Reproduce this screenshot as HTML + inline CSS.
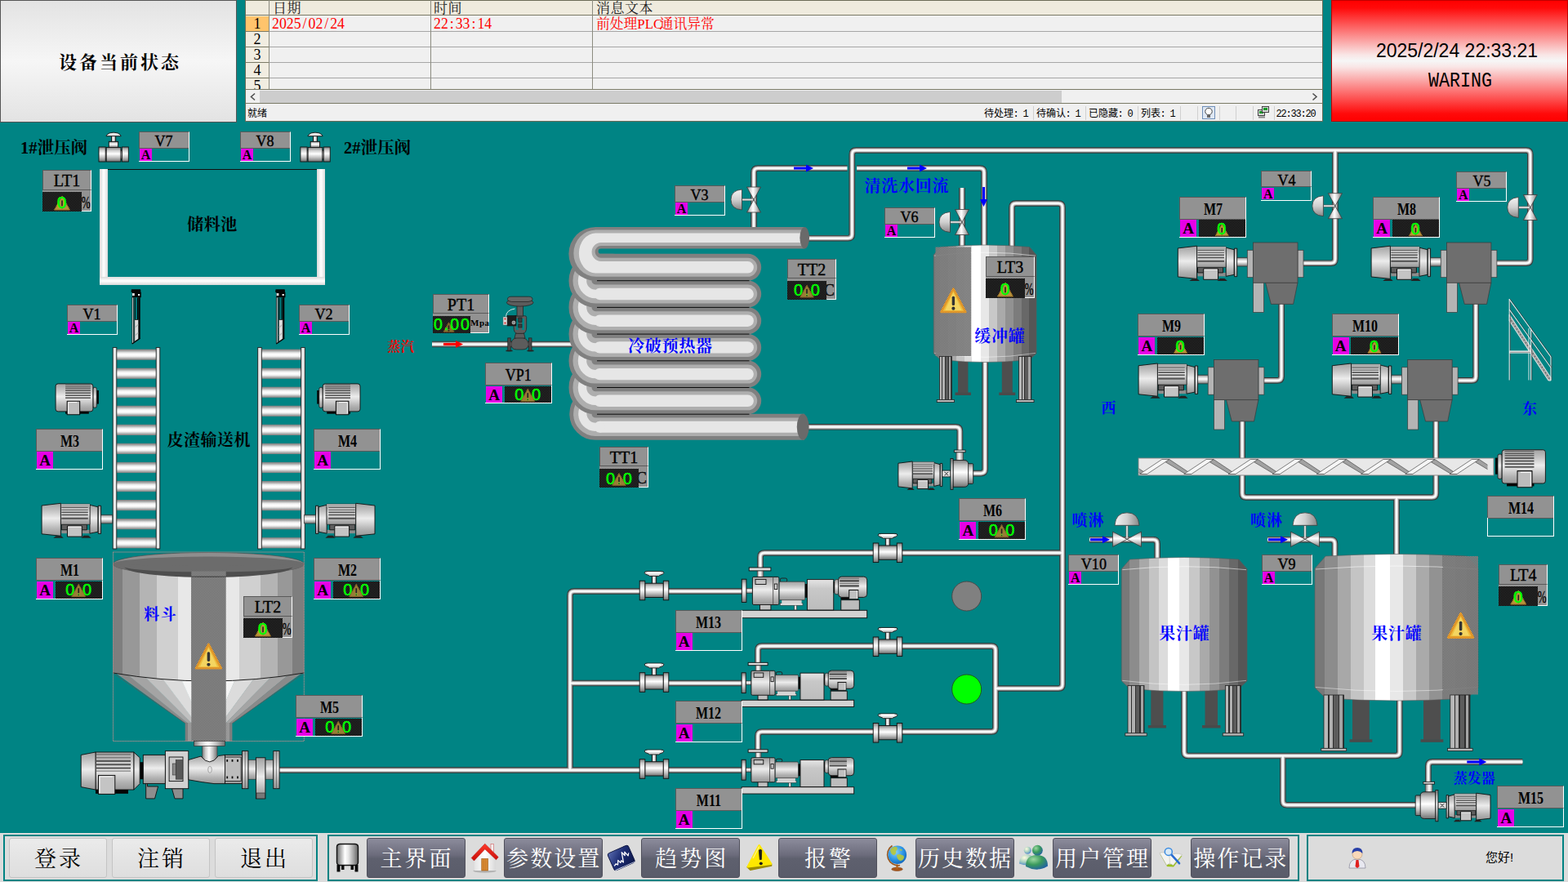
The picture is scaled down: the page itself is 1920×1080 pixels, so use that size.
<!DOCTYPE html>
<html lang="zh"><head><meta charset="utf-8"><title>HMI</title><style>
html,body{margin:0;padding:0;background:#008484}
body{width:1920px;height:1080px;overflow:hidden;position:relative;font-family:"Liberation Sans",sans-serif}
.ser{font-family:"Liberation Serif",serif}
.san{font-family:"Liberation Sans",sans-serif}
.mono{font-family:"Liberation Mono",monospace}
#gfx,#top{position:absolute;left:0;top:0}
#top text,#gfx text{white-space:pre}
</style></head>
<body>
<svg width="0" height="0" style="position:absolute"><defs>
<linearGradient id="cylV" x1="0" y1="0" x2="0" y2="1"><stop offset="0" stop-color="#6a6a6a"/><stop offset="0.12" stop-color="#9a9a9a"/><stop offset="0.38" stop-color="#ffffff"/><stop offset="0.55" stop-color="#e6e6e6"/><stop offset="0.8" stop-color="#a0a0a0"/><stop offset="1" stop-color="#606060"/></linearGradient>
<linearGradient id="cylH" x1="0" y1="0" x2="1" y2="0"><stop offset="0" stop-color="#6a6a6a"/><stop offset="0.12" stop-color="#9a9a9a"/><stop offset="0.38" stop-color="#ffffff"/><stop offset="0.55" stop-color="#e6e6e6"/><stop offset="0.8" stop-color="#a0a0a0"/><stop offset="1" stop-color="#606060"/></linearGradient>
<linearGradient id="cylV2" x1="0" y1="0" x2="0" y2="1"><stop offset="0" stop-color="#7c7c7c"/><stop offset="0.2" stop-color="#cacaca"/><stop offset="0.45" stop-color="#ffffff"/><stop offset="0.7" stop-color="#c6c6c6"/><stop offset="1" stop-color="#727272"/></linearGradient>
<linearGradient id="cylH2" x1="0" y1="0" x2="1" y2="0"><stop offset="0" stop-color="#7c7c7c"/><stop offset="0.2" stop-color="#cacaca"/><stop offset="0.45" stop-color="#ffffff"/><stop offset="0.7" stop-color="#c6c6c6"/><stop offset="1" stop-color="#727272"/></linearGradient>
<linearGradient id="tankH" x1="0" y1="0" x2="1" y2="0"><stop offset="0" stop-color="#787878"/><stop offset="0.06" stop-color="#787878"/><stop offset="0.06" stop-color="#8c8c8c"/><stop offset="0.14" stop-color="#8c8c8c"/><stop offset="0.14" stop-color="#a8a8a8"/><stop offset="0.22" stop-color="#a8a8a8"/><stop offset="0.22" stop-color="#c4c4c4"/><stop offset="0.3" stop-color="#c4c4c4"/><stop offset="0.3" stop-color="#dcdcdc"/><stop offset="0.37" stop-color="#dcdcdc"/><stop offset="0.37" stop-color="#ffffff"/><stop offset="0.46" stop-color="#ffffff"/><stop offset="0.46" stop-color="#e8e8e8"/><stop offset="0.54" stop-color="#e8e8e8"/><stop offset="0.54" stop-color="#c8c8c8"/><stop offset="0.62" stop-color="#c8c8c8"/><stop offset="0.62" stop-color="#aaaaaa"/><stop offset="0.7" stop-color="#aaaaaa"/><stop offset="0.7" stop-color="#929292"/><stop offset="0.78" stop-color="#929292"/><stop offset="0.78" stop-color="#7c7c7c"/><stop offset="0.86" stop-color="#7c7c7c"/><stop offset="0.86" stop-color="#686868"/><stop offset="0.93" stop-color="#686868"/><stop offset="0.93" stop-color="#565656"/><stop offset="1" stop-color="#565656"/></linearGradient>
<linearGradient id="hopH" x1="0" y1="0" x2="1" y2="0"><stop offset="0" stop-color="#7e7e7e"/><stop offset="0.05" stop-color="#7e7e7e"/><stop offset="0.05" stop-color="#989898"/><stop offset="0.14" stop-color="#989898"/><stop offset="0.14" stop-color="#b4b4b4"/><stop offset="0.23" stop-color="#b4b4b4"/><stop offset="0.23" stop-color="#d0d0d0"/><stop offset="0.34" stop-color="#d0d0d0"/><stop offset="0.34" stop-color="#e8e8e8"/><stop offset="0.41" stop-color="#e8e8e8"/><stop offset="0.41" stop-color="#8a8a8a"/><stop offset="0.59" stop-color="#8a8a8a"/><stop offset="0.59" stop-color="#e8e8e8"/><stop offset="0.66" stop-color="#e8e8e8"/><stop offset="0.66" stop-color="#d0d0d0"/><stop offset="0.77" stop-color="#d0d0d0"/><stop offset="0.77" stop-color="#b4b4b4"/><stop offset="0.86" stop-color="#b4b4b4"/><stop offset="0.86" stop-color="#989898"/><stop offset="0.94" stop-color="#989898"/><stop offset="0.94" stop-color="#7e7e7e"/><stop offset="1" stop-color="#7e7e7e"/></linearGradient>
<linearGradient id="legH" x1="0" y1="0" x2="1" y2="0"><stop offset="0" stop-color="#b8b8b8"/><stop offset="0.2" stop-color="#b8b8b8"/><stop offset="0.2" stop-color="#2e2e2e"/><stop offset="0.27" stop-color="#2e2e2e"/><stop offset="0.27" stop-color="#b0b0b0"/><stop offset="0.44" stop-color="#b0b0b0"/><stop offset="0.44" stop-color="#2e2e2e"/><stop offset="0.5" stop-color="#2e2e2e"/><stop offset="0.5" stop-color="#5c5c5c"/><stop offset="0.72" stop-color="#5c5c5c"/><stop offset="0.72" stop-color="#2e2e2e"/><stop offset="0.78" stop-color="#2e2e2e"/><stop offset="0.78" stop-color="#a4a4a4"/><stop offset="0.93" stop-color="#a4a4a4"/><stop offset="0.93" stop-color="#3a3a3a"/><stop offset="1" stop-color="#3a3a3a"/></linearGradient>
<linearGradient id="wallH" x1="0" y1="0" x2="1" y2="0"><stop offset="0" stop-color="#d8d8d8"/><stop offset="0.5" stop-color="#ffffff"/><stop offset="1" stop-color="#dcdcdc"/></linearGradient>
<linearGradient id="wallV" x1="0" y1="0" x2="0" y2="1"><stop offset="0" stop-color="#dcdcdc"/><stop offset="0.5" stop-color="#ffffff"/><stop offset="1" stop-color="#d8d8d8"/></linearGradient>
<linearGradient id="domeH" x1="0" y1="0" x2="1" y2="0"><stop offset="0" stop-color="#f4f4f4"/><stop offset="0.5" stop-color="#d0d0d0"/><stop offset="1" stop-color="#888888"/></linearGradient>
<linearGradient id="domeV" x1="0" y1="0" x2="0" y2="1"><stop offset="0" stop-color="#f4f4f4"/><stop offset="0.5" stop-color="#d0d0d0"/><stop offset="1" stop-color="#888888"/></linearGradient>
<pattern id="dithT" width="2" height="2" patternUnits="userSpaceOnUse"><rect width="1" height="1" fill="#a2a2a2"/><rect x="1" y="1" width="1" height="1" fill="#a2a2a2"/></pattern>
<pattern id="dith" width="2" height="2" patternUnits="userSpaceOnUse"><rect width="2" height="2" fill="#989898"/><rect width="1" height="1" fill="#606060"/><rect x="1" y="1" width="1" height="1" fill="#606060"/></pattern>
<linearGradient id="motV" x1="0" y1="0" x2="0" y2="1"><stop offset="0" stop-color="#a2a2a2"/><stop offset="0.22" stop-color="#c2c2c2"/><stop offset="0.46" stop-color="#ececec"/><stop offset="0.6" stop-color="#d6d6d6"/><stop offset="0.8" stop-color="#b2b2b2"/><stop offset="1" stop-color="#989898"/></linearGradient>
<linearGradient id="guardV" x1="0" y1="0" x2="0" y2="1"><stop offset="0" stop-color="#e4e4e4"/><stop offset="0.12" stop-color="#dadada"/><stop offset="0.3" stop-color="#c8c8c8"/><stop offset="1" stop-color="#bcbcbc"/></linearGradient>
<linearGradient id="rollV" x1="0" y1="0" x2="0" y2="1"><stop offset="0" stop-color="#7c7c7c"/><stop offset="0.14" stop-color="#a4a4a4"/><stop offset="0.34" stop-color="#ececec"/><stop offset="0.5" stop-color="#ffffff"/><stop offset="0.66" stop-color="#f2f2f2"/><stop offset="0.86" stop-color="#acacac"/><stop offset="1" stop-color="#7c7c7c"/></linearGradient>
<clipPath id="scClip"><rect x="1394.5" y="561.5" width="427" height="20"/></clipPath>
<linearGradient id="roofG" x1="0" y1="0" x2="0" y2="1"><stop offset="0" stop-color="#ff3a2a"/><stop offset="1" stop-color="#c80c08"/></linearGradient>
<linearGradient id="wallG" x1="0" y1="0" x2="1" y2="0"><stop offset="0" stop-color="#e4e4e4"/><stop offset="0.5" stop-color="#ffffff"/><stop offset="1" stop-color="#d8d8d8"/></linearGradient>
<linearGradient id="trendG" x1="0" y1="0" x2="1" y2="1"><stop offset="0" stop-color="#5a6cb0"/><stop offset="0.45" stop-color="#1e2e74"/><stop offset="1" stop-color="#0c1648"/></linearGradient>
<radialGradient id="globeG" cx="0.4" cy="0.35" r="0.7"><stop offset="0" stop-color="#8ad0f8"/><stop offset="0.6" stop-color="#2a94e4"/><stop offset="1" stop-color="#1464b8"/></radialGradient>
<radialGradient id="usrA" cx="0.35" cy="0.3" r="0.8"><stop offset="0" stop-color="#fffbe0"/><stop offset="0.5" stop-color="#a8d0c0"/><stop offset="1" stop-color="#3a78d0"/></radialGradient>
<radialGradient id="usrB" cx="0.35" cy="0.3" r="0.85"><stop offset="0" stop-color="#9cd8a0"/><stop offset="0.45" stop-color="#3a9a5c"/><stop offset="1" stop-color="#1c54b4"/></radialGradient>
</defs></svg>
<svg id="gfx" width="1920" height="1080" viewBox="0 0 1920 1080">
<g fill="none" stroke-linecap="butt" stroke-linejoin="round"><path d="M529 421.5L702 421.5M923 282L923 211Q923 206 928 206L1200 206Q1205 206 1205 211L1205 302M1178 230L1178 302M1239 302L1239 254Q1239 249 1244 249L1296 249Q1301 249 1301 254L1301 838Q1301 843 1296 843L1219 843M928 814L928 796.1Q928 791.1 933 791.1L1214 791.1Q1219 791.1 1219 796.1L1219 891Q1219 896 1214 896L933 896Q928 896 928 901L928 920M931 702L931 682Q931 677 936 677L1301 677M341 943L910 943M698 943L698 729Q698 724 703 724L910 724M698 836.5L910 836.5M988 522.8L1170.4 522.8Q1175.4 522.8 1175.4 527.8L1175.4 553M1206.2 440L1206.2 574.6Q1206.2 579.6 1201.2 579.6L1190 579.6M1334 660.7L1412.1 660.7Q1417.1 660.7 1417.1 665.7L1417.1 686M1552 660.7L1629.5 660.7Q1634.5 660.7 1634.5 665.7L1634.5 686M1569.1 370L1569.1 460.9Q1569.1 465.9 1564.1 465.9L1547 465.9M1807.1 370L1807.1 460.9Q1807.1 465.9 1802.1 465.9L1784 465.9M1521.1 512L1521.1 604Q1521.1 609 1526.1 609L1753.3 609Q1758.3 609 1758.3 604L1758.3 512M1710 609L1710 682M1450 845L1450 920.5Q1450 925.5 1455 925.5L1708.8 925.5Q1713.8 925.5 1713.8 920.5L1713.8 856M1570.8 925.5L1570.8 980.8Q1570.8 985.8 1575.8 985.8L1734 985.8M1748.9 959L1748.9 937.9Q1748.9 932.9 1753.9 932.9L1864.3 932.9" stroke="#363636" stroke-width="7.6"/><path d="M529 421.5L702 421.5M923 282L923 211Q923 206 928 206L1200 206Q1205 206 1205 211L1205 302M1178 230L1178 302M1239 302L1239 254Q1239 249 1244 249L1296 249Q1301 249 1301 254L1301 838Q1301 843 1296 843L1219 843M928 814L928 796.1Q928 791.1 933 791.1L1214 791.1Q1219 791.1 1219 796.1L1219 891Q1219 896 1214 896L933 896Q928 896 928 901L928 920M931 702L931 682Q931 677 936 677L1301 677M341 943L910 943M698 943L698 729Q698 724 703 724L910 724M698 836.5L910 836.5M988 522.8L1170.4 522.8Q1175.4 522.8 1175.4 527.8L1175.4 553M1206.2 440L1206.2 574.6Q1206.2 579.6 1201.2 579.6L1190 579.6M1334 660.7L1412.1 660.7Q1417.1 660.7 1417.1 665.7L1417.1 686M1552 660.7L1629.5 660.7Q1634.5 660.7 1634.5 665.7L1634.5 686M1569.1 370L1569.1 460.9Q1569.1 465.9 1564.1 465.9L1547 465.9M1807.1 370L1807.1 460.9Q1807.1 465.9 1802.1 465.9L1784 465.9M1521.1 512L1521.1 604Q1521.1 609 1526.1 609L1753.3 609Q1758.3 609 1758.3 604L1758.3 512M1710 609L1710 682M1450 845L1450 920.5Q1450 925.5 1455 925.5L1708.8 925.5Q1713.8 925.5 1713.8 920.5L1713.8 856M1570.8 925.5L1570.8 980.8Q1570.8 985.8 1575.8 985.8L1734 985.8M1748.9 959L1748.9 937.9Q1748.9 932.9 1753.9 932.9L1864.3 932.9" stroke="#8e8e8e" stroke-width="5.7"/><path d="M529 421.5L702 421.5M923 282L923 211Q923 206 928 206L1200 206Q1205 206 1205 211L1205 302M1178 230L1178 302M1239 302L1239 254Q1239 249 1244 249L1296 249Q1301 249 1301 254L1301 838Q1301 843 1296 843L1219 843M928 814L928 796.1Q928 791.1 933 791.1L1214 791.1Q1219 791.1 1219 796.1L1219 891Q1219 896 1214 896L933 896Q928 896 928 901L928 920M931 702L931 682Q931 677 936 677L1301 677M341 943L910 943M698 943L698 729Q698 724 703 724L910 724M698 836.5L910 836.5M988 522.8L1170.4 522.8Q1175.4 522.8 1175.4 527.8L1175.4 553M1206.2 440L1206.2 574.6Q1206.2 579.6 1201.2 579.6L1190 579.6M1334 660.7L1412.1 660.7Q1417.1 660.7 1417.1 665.7L1417.1 686M1552 660.7L1629.5 660.7Q1634.5 660.7 1634.5 665.7L1634.5 686M1569.1 370L1569.1 460.9Q1569.1 465.9 1564.1 465.9L1547 465.9M1807.1 370L1807.1 460.9Q1807.1 465.9 1802.1 465.9L1784 465.9M1521.1 512L1521.1 604Q1521.1 609 1526.1 609L1753.3 609Q1758.3 609 1758.3 604L1758.3 512M1710 609L1710 682M1450 845L1450 920.5Q1450 925.5 1455 925.5L1708.8 925.5Q1713.8 925.5 1713.8 920.5L1713.8 856M1570.8 925.5L1570.8 980.8Q1570.8 985.8 1575.8 985.8L1734 985.8M1748.9 959L1748.9 937.9Q1748.9 932.9 1753.9 932.9L1864.3 932.9" stroke="#c6c6c6" stroke-width="4.1"/><path d="M529 421.5L702 421.5M923 282L923 211Q923 206 928 206L1200 206Q1205 206 1205 211L1205 302M1178 230L1178 302M1239 302L1239 254Q1239 249 1244 249L1296 249Q1301 249 1301 254L1301 838Q1301 843 1296 843L1219 843M928 814L928 796.1Q928 791.1 933 791.1L1214 791.1Q1219 791.1 1219 796.1L1219 891Q1219 896 1214 896L933 896Q928 896 928 901L928 920M931 702L931 682Q931 677 936 677L1301 677M341 943L910 943M698 943L698 729Q698 724 703 724L910 724M698 836.5L910 836.5M988 522.8L1170.4 522.8Q1175.4 522.8 1175.4 527.8L1175.4 553M1206.2 440L1206.2 574.6Q1206.2 579.6 1201.2 579.6L1190 579.6M1334 660.7L1412.1 660.7Q1417.1 660.7 1417.1 665.7L1417.1 686M1552 660.7L1629.5 660.7Q1634.5 660.7 1634.5 665.7L1634.5 686M1569.1 370L1569.1 460.9Q1569.1 465.9 1564.1 465.9L1547 465.9M1807.1 370L1807.1 460.9Q1807.1 465.9 1802.1 465.9L1784 465.9M1521.1 512L1521.1 604Q1521.1 609 1526.1 609L1753.3 609Q1758.3 609 1758.3 604L1758.3 512M1710 609L1710 682M1450 845L1450 920.5Q1450 925.5 1455 925.5L1708.8 925.5Q1713.8 925.5 1713.8 920.5L1713.8 856M1570.8 925.5L1570.8 980.8Q1570.8 985.8 1575.8 985.8L1734 985.8M1748.9 959L1748.9 937.9Q1748.9 932.9 1753.9 932.9L1864.3 932.9" stroke="#f0f0f0" stroke-width="2.43"/><path d="M529 421.5L702 421.5M923 282L923 211Q923 206 928 206L1200 206Q1205 206 1205 211L1205 302M1178 230L1178 302M1239 302L1239 254Q1239 249 1244 249L1296 249Q1301 249 1301 254L1301 838Q1301 843 1296 843L1219 843M928 814L928 796.1Q928 791.1 933 791.1L1214 791.1Q1219 791.1 1219 796.1L1219 891Q1219 896 1214 896L933 896Q928 896 928 901L928 920M931 702L931 682Q931 677 936 677L1301 677M341 943L910 943M698 943L698 729Q698 724 703 724L910 724M698 836.5L910 836.5M988 522.8L1170.4 522.8Q1175.4 522.8 1175.4 527.8L1175.4 553M1206.2 440L1206.2 574.6Q1206.2 579.6 1201.2 579.6L1190 579.6M1334 660.7L1412.1 660.7Q1417.1 660.7 1417.1 665.7L1417.1 686M1552 660.7L1629.5 660.7Q1634.5 660.7 1634.5 665.7L1634.5 686M1569.1 370L1569.1 460.9Q1569.1 465.9 1564.1 465.9L1547 465.9M1807.1 370L1807.1 460.9Q1807.1 465.9 1802.1 465.9L1784 465.9M1521.1 512L1521.1 604Q1521.1 609 1526.1 609L1753.3 609Q1758.3 609 1758.3 604L1758.3 512M1710 609L1710 682M1450 845L1450 920.5Q1450 925.5 1455 925.5L1708.8 925.5Q1713.8 925.5 1713.8 920.5L1713.8 856M1570.8 925.5L1570.8 980.8Q1570.8 985.8 1575.8 985.8L1734 985.8M1748.9 959L1748.9 937.9Q1748.9 932.9 1753.9 932.9L1864.3 932.9" stroke="#ffffff" stroke-width="1.14"/></g>
<path d="M1043.300 199V213" stroke="#008484" stroke-width="11.600" fill="none"/>
<g fill="none" stroke-linecap="butt" stroke-linejoin="round"><path d="M988 291.7L1038.3 291.7Q1043.3 291.7 1043.3 286.7L1043.3 189Q1043.3 184 1048.3 184L1868.8 184Q1873.8 184 1873.8 189L1873.8 317.2Q1873.8 322.2 1868.8 322.2L1832 322.2M1634.9 184L1634.9 317.2Q1634.9 322.2 1629.9 322.2L1594 322.2" stroke="#363636" stroke-width="7.6"/><path d="M988 291.7L1038.3 291.7Q1043.3 291.7 1043.3 286.7L1043.3 189Q1043.3 184 1048.3 184L1868.8 184Q1873.8 184 1873.8 189L1873.8 317.2Q1873.8 322.2 1868.8 322.2L1832 322.2M1634.9 184L1634.9 317.2Q1634.9 322.2 1629.9 322.2L1594 322.2" stroke="#8e8e8e" stroke-width="5.7"/><path d="M988 291.7L1038.3 291.7Q1043.3 291.7 1043.3 286.7L1043.3 189Q1043.3 184 1048.3 184L1868.8 184Q1873.8 184 1873.8 189L1873.8 317.2Q1873.8 322.2 1868.8 322.2L1832 322.2M1634.9 184L1634.9 317.2Q1634.9 322.2 1629.9 322.2L1594 322.2" stroke="#c6c6c6" stroke-width="4.1"/><path d="M988 291.7L1038.3 291.7Q1043.3 291.7 1043.3 286.7L1043.3 189Q1043.3 184 1048.3 184L1868.8 184Q1873.8 184 1873.8 189L1873.8 317.2Q1873.8 322.2 1868.8 322.2L1832 322.2M1634.9 184L1634.9 317.2Q1634.9 322.2 1629.9 322.2L1594 322.2" stroke="#f0f0f0" stroke-width="2.43"/><path d="M988 291.7L1038.3 291.7Q1043.3 291.7 1043.3 286.7L1043.3 189Q1043.3 184 1048.3 184L1868.8 184Q1873.8 184 1873.8 189L1873.8 317.2Q1873.8 322.2 1868.8 322.2L1832 322.2M1634.9 184L1634.9 317.2Q1634.9 322.2 1629.9 322.2L1594 322.2" stroke="#ffffff" stroke-width="1.14"/></g>
<path d="M-12 -1.5h15v-3l9 4.500-9 4.500v-3h-15z" fill="#ff0000" transform="translate(555,421.5) rotate(0)"/>
<path d="M-12 -1.5h15v-3l9 4.500-9 4.500v-3h-15z" fill="#0000ff" transform="translate(984,206) rotate(0)"/>
<path d="M-12 -1.5h15v-3l9 4.500-9 4.500v-3h-15z" fill="#0000ff" transform="translate(1123,206) rotate(0)"/>
<path d="M-12 -1.5h15v-3l9 4.500-9 4.500v-3h-15z" fill="#0000ff" transform="translate(1204.5,241) rotate(90)"/>
<path d="M-12 -1.5h15v-3l9 4.500-9 4.500v-3h-15z" fill="#0000ff" transform="translate(1347,660.8) rotate(0)"/>
<path d="M-12 -1.5h15v-3l9 4.500-9 4.500v-3h-15z" fill="#0000ff" transform="translate(1565,660.8) rotate(0)"/>
<path d="M-12 -1.5h15v-3l9 4.500-9 4.500v-3h-15z" fill="#0000ff" transform="translate(1808.3,932.9) rotate(0)"/>
<g><rect x="122" y="207" width="10" height="142" fill="url(#wallH)"/><rect x="388" y="207" width="10" height="142" fill="url(#wallH)"/><rect x="122" y="339" width="276" height="10" fill="url(#wallV)"/><path d="M132 207.500H388" stroke="#111" stroke-width="1"/></g>
<g><rect x="142.5" y="427.6" width="49" height="13.2" fill="url(#rollV)"/><rect x="142.5" y="450.65" width="49" height="13.2" fill="url(#rollV)"/><rect x="142.5" y="473.7" width="49" height="13.2" fill="url(#rollV)"/><rect x="142.5" y="496.75" width="49" height="13.2" fill="url(#rollV)"/><rect x="142.5" y="519.8" width="49" height="13.2" fill="url(#rollV)"/><rect x="142.5" y="542.85" width="49" height="13.2" fill="url(#rollV)"/><rect x="142.5" y="565.9" width="49" height="13.2" fill="url(#rollV)"/><rect x="142.5" y="588.95" width="49" height="13.2" fill="url(#rollV)"/><rect x="142.5" y="612" width="49" height="13.2" fill="url(#rollV)"/><rect x="142.5" y="635.05" width="49" height="13.2" fill="url(#rollV)"/><rect x="142.5" y="658.1" width="49" height="13.2" fill="url(#rollV)"/><rect x="138.2" y="425.6" width="4.6" height="246.4" fill="#e9e9e9" stroke="#1c1c1c" stroke-width="0.9"/><rect x="191.2" y="425.6" width="4.6" height="246.4" fill="#e9e9e9" stroke="#1c1c1c" stroke-width="0.9"/></g>
<g><rect x="320" y="427.6" width="49" height="13.2" fill="url(#rollV)"/><rect x="320" y="450.65" width="49" height="13.2" fill="url(#rollV)"/><rect x="320" y="473.7" width="49" height="13.2" fill="url(#rollV)"/><rect x="320" y="496.75" width="49" height="13.2" fill="url(#rollV)"/><rect x="320" y="519.8" width="49" height="13.2" fill="url(#rollV)"/><rect x="320" y="542.85" width="49" height="13.2" fill="url(#rollV)"/><rect x="320" y="565.9" width="49" height="13.2" fill="url(#rollV)"/><rect x="320" y="588.95" width="49" height="13.2" fill="url(#rollV)"/><rect x="320" y="612" width="49" height="13.2" fill="url(#rollV)"/><rect x="320" y="635.05" width="49" height="13.2" fill="url(#rollV)"/><rect x="320" y="658.1" width="49" height="13.2" fill="url(#rollV)"/><rect x="315.7" y="425.6" width="4.6" height="246.4" fill="#e9e9e9" stroke="#1c1c1c" stroke-width="0.9"/><rect x="368.7" y="425.6" width="4.6" height="246.4" fill="#e9e9e9" stroke="#1c1c1c" stroke-width="0.9"/></g>
<g transform="translate(68.1,469.9)" stroke-linejoin="round"><rect x="50.21" y="8.11" width="2.59" height="16.6" fill="#050505"/><rect x="11.99" y="33.31" width="28.72" height="3.49" fill="#050505"/><rect x="45.78" y="4.4" width="4.44" height="25.01" fill="url(#motV)" stroke="#111" stroke-width="0.8" rx="2"/><rect x="0" y="0" width="45.78" height="34" fill="url(#motV)" stroke="#111" stroke-width="0.9" rx="3"/><rect x="11.99" y="1.14" width="30.78" height="0.76" fill="#555555"/><rect x="11.99" y="3.22" width="30.78" height="1.14" fill="#555555"/><rect x="11.99" y="5.31" width="30.78" height="1.14" fill="#555555"/><rect x="11.99" y="7.58" width="30.78" height="1.59" fill="#555555"/><rect x="11.99" y="10.54" width="30.78" height="1.59" fill="#555555"/><rect x="11.99" y="13.53" width="30.78" height="1.59" fill="#555555"/><rect x="11.99" y="16.52" width="30.78" height="1.59" fill="#555555"/><rect x="14.1" y="21.3" width="15.47" height="16.6" fill="#bcbcbc" stroke="#111" stroke-width="1.1"/><path d="M15.58 36.38V22.74H26.4" fill="none" stroke="#fff" stroke-width="1"/></g>
<g transform="translate(441,469.9) scale(-1,1)" stroke-linejoin="round"><rect x="50.21" y="8.11" width="2.59" height="16.6" fill="#050505"/><rect x="11.99" y="33.31" width="28.72" height="3.49" fill="#050505"/><rect x="45.78" y="4.4" width="4.44" height="25.01" fill="url(#motV)" stroke="#111" stroke-width="0.8" rx="2"/><rect x="0" y="0" width="45.78" height="34" fill="url(#motV)" stroke="#111" stroke-width="0.9" rx="3"/><rect x="11.99" y="1.14" width="30.78" height="0.76" fill="#555555"/><rect x="11.99" y="3.22" width="30.78" height="1.14" fill="#555555"/><rect x="11.99" y="5.31" width="30.78" height="1.14" fill="#555555"/><rect x="11.99" y="7.58" width="30.78" height="1.59" fill="#555555"/><rect x="11.99" y="10.54" width="30.78" height="1.59" fill="#555555"/><rect x="11.99" y="13.53" width="30.78" height="1.59" fill="#555555"/><rect x="11.99" y="16.52" width="30.78" height="1.59" fill="#555555"/><rect x="14.1" y="21.3" width="15.47" height="16.6" fill="#bcbcbc" stroke="#111" stroke-width="1.1"/><path d="M15.58 36.38V22.74H26.4" fill="none" stroke="#fff" stroke-width="1"/></g>
<g transform="translate(51.1,616.3)" stroke-linejoin="round"><path d="M14.21 42.5L17.4 39.95L23.93 39.95L26.68 42.5Z" fill="#222"/><path d="M48.29 42.5L51.47 39.52L57.28 39.52L60.61 42.5Z" fill="#222"/><rect x="24.21" y="32.51" width="34.66" height="4.38" fill="#8c8c8c"/><rect x="24.21" y="25.8" width="31.1" height="6.71" fill="#5e5e5e" stroke="#111" stroke-width="0.9"/><path d="M58.87 2L68.88 4.5L68.88 34.89L58.87 36.89Z" fill="url(#motV)" stroke="#111" stroke-width="0.9"/><rect x="23.27" y="0.85" width="35.6" height="25.07" fill="url(#motV)" stroke="#111" stroke-width="0.6"/><rect x="23.27" y="0.85" width="35.6" height="3.82" fill="#acacac"/><rect x="24.21" y="4.67" width="32.48" height="0.93" fill="#555555"/><rect x="24.21" y="7.65" width="32.48" height="0.93" fill="#555555"/><rect x="24.21" y="10.2" width="32.48" height="1.7" fill="#555555"/><rect x="24.21" y="13.3" width="32.48" height="1.7" fill="#555555"/><rect x="24.21" y="17.43" width="32.48" height="2.12" fill="#555555"/><path d="M0 2.72L23.27 0L23.27 39.95L0 37.53Z" fill="url(#motV)" stroke="#111" stroke-width="0.9"/><rect x="69.16" y="2.98" width="3.33" height="34.21" fill="url(#motV)" stroke="#111" stroke-width="0.9"/><rect x="72.5" y="14.11" width="14" height="10.58" fill="url(#cylV2)" stroke="#222" stroke-width="0.6"/><rect x="31.39" y="27.71" width="17.84" height="13.09" fill="#c4c4c4" stroke="#111" stroke-width="1"/><rect x="32.26" y="28.26" width="16.09" height="1.27" fill="#f4f4f4"/></g>
<g transform="translate(459,616.3) scale(-1,1)" stroke-linejoin="round"><path d="M14.21 42.5L17.4 39.95L23.93 39.95L26.68 42.5Z" fill="#222"/><path d="M48.29 42.5L51.47 39.52L57.28 39.52L60.61 42.5Z" fill="#222"/><rect x="24.21" y="32.51" width="34.66" height="4.38" fill="#8c8c8c"/><rect x="24.21" y="25.8" width="31.1" height="6.71" fill="#5e5e5e" stroke="#111" stroke-width="0.9"/><path d="M58.87 2L68.88 4.5L68.88 34.89L58.87 36.89Z" fill="url(#motV)" stroke="#111" stroke-width="0.9"/><rect x="23.27" y="0.85" width="35.6" height="25.07" fill="url(#motV)" stroke="#111" stroke-width="0.6"/><rect x="23.27" y="0.85" width="35.6" height="3.82" fill="#acacac"/><rect x="24.21" y="4.67" width="32.48" height="0.93" fill="#555555"/><rect x="24.21" y="7.65" width="32.48" height="0.93" fill="#555555"/><rect x="24.21" y="10.2" width="32.48" height="1.7" fill="#555555"/><rect x="24.21" y="13.3" width="32.48" height="1.7" fill="#555555"/><rect x="24.21" y="17.43" width="32.48" height="2.12" fill="#555555"/><path d="M0 2.72L23.27 0L23.27 39.95L0 37.53Z" fill="url(#motV)" stroke="#111" stroke-width="0.9"/><rect x="69.16" y="2.98" width="3.33" height="34.21" fill="url(#motV)" stroke="#111" stroke-width="0.9"/><rect x="72.5" y="14.11" width="14" height="10.58" fill="url(#cylV2)" stroke="#222" stroke-width="0.6"/><rect x="31.39" y="27.71" width="17.84" height="13.09" fill="#c4c4c4" stroke="#111" stroke-width="1"/><rect x="32.26" y="28.26" width="16.09" height="1.27" fill="#f4f4f4"/></g>
<g transform="translate(161,354)"><path d="M0.500 0.300h10q0.800 0 0.800 1v2.700h-11.600v-2.700q0 -1 0.800 -1z" fill="#050505"/><rect x="0.800" y="3.800" width="11" height="6.400" fill="#050505"/><rect x="1" y="5" width="2.800" height="3.200" fill="#dcdcdc"/><rect x="8" y="6" width="2.200" height="2" fill="#f0f0f0"/><path d="M8.300 10h2.400V60.300l-2.400 1.600z" fill="#050505"/><path d="M4.300 10.500V37.500M7.400 10.500V37.500" stroke="#050505" stroke-width="1.100"/><path d="M3.700 37.500h5v23.500l-5 3.500z" fill="#dedede" stroke="#1a1a1a" stroke-width="0.8"/><path d="M4.200 47l4 -3.500M4.200 57l4 -3.500" stroke="#b8b8b8" stroke-width="1.200"/><path d="M0.800 10h1.700V65.800l-1.700 1.200z" fill="#ececec" stroke="#050505" stroke-width="0.700"/><path d="M0.800 67L10.700 60.300" stroke="#050505" stroke-width="1.200"/></g>
<g transform="translate(337.6,354)"><path d="M0.500 0.300h10q0.800 0 0.800 1v2.700h-11.600v-2.700q0 -1 0.800 -1z" fill="#050505"/><rect x="0.800" y="3.800" width="11" height="6.400" fill="#050505"/><rect x="1" y="5" width="2.800" height="3.200" fill="#dcdcdc"/><rect x="8" y="6" width="2.200" height="2" fill="#f0f0f0"/><path d="M8.300 10h2.400V60.300l-2.400 1.600z" fill="#050505"/><path d="M4.300 10.500V37.500M7.400 10.500V37.500" stroke="#050505" stroke-width="1.100"/><path d="M3.700 37.500h5v23.500l-5 3.500z" fill="#dedede" stroke="#1a1a1a" stroke-width="0.8"/><path d="M4.200 47l4 -3.500M4.200 57l4 -3.500" stroke="#b8b8b8" stroke-width="1.200"/><path d="M0.800 10h1.700V65.800l-1.700 1.200z" fill="#ececec" stroke="#050505" stroke-width="0.700"/><path d="M0.800 67L10.700 60.300" stroke="#050505" stroke-width="1.200"/></g>
<g transform="translate(139.1,162)" stroke="#111" stroke-width="0.9"><rect x="-2.6" y="4.2" width="5.2" height="7.5" fill="url(#cylH2)"/><path d="M-9.100 4.700Q-9.100 3 -5 0.900Q0 -0.600 5 0.900Q9.100 3 9.100 4.700Z" fill="#e4e4e4"/><rect x="-5.8" y="11.3" width="11.3" height="7.4" fill="url(#cylV2)"/><rect x="-10.2" y="22" width="20.6" height="11" fill="url(#cylV2)"/><rect x="-8.9" y="18.4" width="17.7" height="17.6" fill="url(#cylV2)"/><rect x="-18.1" y="18" width="8.2" height="18" fill="url(#cylV2)"/><rect x="10.2" y="18" width="8" height="18" fill="url(#cylV2)"/></g>
<g transform="translate(386,162)" stroke="#111" stroke-width="0.9"><rect x="-2.6" y="4.2" width="5.2" height="7.5" fill="url(#cylH2)"/><path d="M-9.100 4.700Q-9.100 3 -5 0.900Q0 -0.600 5 0.900Q9.100 3 9.100 4.700Z" fill="#e4e4e4"/><rect x="-5.8" y="11.3" width="11.3" height="7.4" fill="url(#cylV2)"/><rect x="-10.2" y="22" width="20.6" height="11" fill="url(#cylV2)"/><rect x="-8.9" y="18.4" width="17.7" height="17.6" fill="url(#cylV2)"/><rect x="-18.1" y="18" width="8.2" height="18" fill="url(#cylV2)"/><rect x="10.2" y="18" width="8" height="18" fill="url(#cylV2)"/></g>
<g><path d="M138.5 822H151.41L230.19 885.500H226.7Z" fill="#8a8a8a"/><path d="M151.01 822H170.93L235 885.500H229.79Z" fill="#a4a4a4"/><path d="M170.53 822H192.44L240.31 885.500H234.6Z" fill="#c0c0c0"/><path d="M192.04 822H217.92L246.6 885.500H239.91Z" fill="#dcdcdc"/><path d="M217.52 822H234.76L250.76 885.500H246.2Z" fill="#f4f4f4"/><path d="M234.36 822H276.84L261.14 885.500H250.36Z" fill="#8a8a8a"/><path d="M276.44 822H292.51L265.01 885.500H260.74Z" fill="#f4f4f4"/><path d="M292.11 822H317.76L271.24 885.500H264.61Z" fill="#dcdcdc"/><path d="M317.36 822H339.27L276.55 885.500H270.84Z" fill="#c0c0c0"/><path d="M338.87 822H358.67L281.34 885.500H276.15Z" fill="#a4a4a4"/><path d="M358.27 822H372.7L284.8 885.500H280.94Z" fill="#8a8a8a"/><rect x="226.7" y="885" width="57.7" height="22.500" fill="url(#hopH)"/><path d="M138.5 690.500V824Q255.4 844 372.3 824V690.500Z" fill="url(#hopH)"/><path d="M138.5 824Q255.4 844 372.3 824" fill="none" stroke="#1c1c1c" stroke-width="1"/><path d="M138.5 824L226.7 885.500M372.3 824L284.4 885.500" stroke="#5a5a5a" stroke-width="0.8"/><rect x="234.3" y="699.5" width="42.4" height="208" fill="url(#dith)"/><ellipse cx="255.4" cy="690.500" rx="116.9" ry="14" fill="#8e8e8e" stroke="#444" stroke-width="0.6"/><path d="M138.5 690.500A116.9 14 0 0 0 372.3 690.500A116.9 9 0 0 0 138.5 690.500Z" fill="#6c6c6c"/><path d="M138.5 690.500A116.9 14 0 0 0 372.3 690.500A116.9 2 0 0 1 138.5 690.500Z" fill="#6c6c6c"/><path d="M152.5 694A102.9 13 0 0 0 358.3 694A102.9 6.500 0 0 1 152.5 694Z" fill="#4e4e4e"/><rect x="234.3" y="699.5" width="42.4" height="6" fill="url(#dith)"/><rect x="138.5" y="676" width="233.8" height="231.500" fill="none" stroke="#f49090" stroke-width="1" stroke-dasharray="1 1"/></g>
<g><path d="M255.4 788.9L270.8 818.3L240 818.3Z" fill="#efbe3c" stroke="#e0962a" stroke-width="2.62" stroke-linejoin="round"/><path d="M255.4 793.45L265.9 816.2L244.9 816.2Z" fill="#f7e47a" opacity="0.6"/><rect x="253.65" y="798.35" width="3.5" height="11.55" rx="1.57" fill="#333"/><circle cx="255.4" cy="813.75" r="2.1" fill="#333"/></g>
<g><rect x="247.75" y="912.5" width="18.25" height="21" fill="url(#cylH2)" stroke="#333" stroke-width="0.6"/><rect x="237.6" y="907.4" width="37.9" height="6.1" fill="url(#cylH2)" stroke="#333" stroke-width="0.7"/><path d="M178.700 945.400H180.500V963H193.600L189.500 977.900H178.700Z" fill="#8e8e8e" stroke="#111" stroke-width="0.9" stroke-linejoin="round"/><path d="M210.500 965.700H224V977.900H214Z" fill="#8e8e8e" stroke="#111" stroke-width="0.9" stroke-linejoin="round"/><rect x="175.3" y="924.4" width="27.1" height="35.2" fill="url(#motV)" stroke="#111" stroke-width="0.9"/><rect x="202.4" y="919.6" width="28.4" height="46.1" fill="#d2d2d2" stroke="#111" stroke-width="0.9"/><rect x="207.1" y="927" width="16.9" height="29.6" fill="#c8c8c8" stroke="#111" stroke-width="0.9"/><rect x="211.2" y="935" width="4.2" height="14" fill="#8a8a8a" stroke="#222" stroke-width="0.5"/><rect x="215.2" y="930.5" width="8.2" height="23.7" fill="#585858" stroke="#222" stroke-width="0.5"/><path d="M230.800 930.500L246 926Q256.900 940 267.500 925.500L275.500 924.400V959.600H262Q248 958 230.800 954.800Z" fill="url(#motV)" stroke="#111" stroke-width="0.9" stroke-linejoin="round"/><ellipse cx="257" cy="942.300" rx="2.300" ry="4" fill="#e8e8e8" stroke="#888" stroke-width="0.7"/><rect x="275.5" y="924.4" width="21" height="35.2" fill="url(#motV)" stroke="#111" stroke-width="0.9"/><rect x="275.5" y="927" width="19.6" height="29.6" fill="#bcbcbc" stroke="#111" stroke-width="0.8"/><rect x="277.3" y="930" width="1.8" height="2.8" fill="#111"/><rect x="277.3" y="950.5" width="1.8" height="2.8" fill="#111"/><rect x="283.6" y="930" width="1.8" height="2.8" fill="#111"/><rect x="283.6" y="950.5" width="1.8" height="2.8" fill="#111"/><rect x="290.1" y="930" width="1.8" height="2.8" fill="#111"/><rect x="290.1" y="950.5" width="1.8" height="2.8" fill="#111"/><rect x="303.9" y="930.5" width="9.5" height="23.7" fill="url(#motV)" stroke="#333" stroke-width="0.6"/><rect x="324.9" y="930.5" width="9.9" height="23.7" fill="url(#motV)" stroke="#333" stroke-width="0.6"/><rect x="313.4" y="927.8" width="11.5" height="50.1" fill="url(#motV)" stroke="#111" stroke-width="0.9"/><rect x="314" y="971" width="10.3" height="6.9" fill="#787878" stroke="#222" stroke-width="0.6"/><rect x="296.5" y="919.6" width="7.4" height="46.1" fill="url(#motV)" stroke="#111" stroke-width="0.9"/><rect x="334.8" y="919.6" width="7.3" height="46.1" fill="url(#motV)" stroke="#111" stroke-width="0.9"/><path d="M300.200 920V965.500M338.400 920V965.500" stroke="#555" stroke-width="0.7"/></g>
<g><rect x="117" y="966" width="40" height="5.8" fill="#050505"/><rect x="171.2" y="933.2" width="4.1" height="21" fill="#050505"/><path d="M163.800 921L171.200 927.800V959.600L163.800 967Z" fill="url(#motV)" stroke="#111" stroke-width="0.9" stroke-linejoin="round"/><rect x="117" y="921" width="46.8" height="46" fill="url(#motV)" stroke="#111" stroke-width="0.9"/><path d="M99.200 924.400L117 921V967L99.200 963.600Z" fill="url(#motV)" stroke="#111" stroke-width="0.9" stroke-linejoin="round"/><rect x="117.5" y="923.4" width="42.5" height="0.9" fill="#555"/><rect x="117.5" y="927.4" width="42.5" height="0.9" fill="#555"/><rect x="117.5" y="930.8" width="42.5" height="2.1" fill="#555"/><rect x="117.5" y="935.2" width="42.5" height="2.1" fill="#555"/><rect x="117.5" y="939.5" width="42.5" height="2.1" fill="#555"/><rect x="117.5" y="943.6" width="42.5" height="0.9" fill="#555"/><rect x="120.5" y="949.4" width="20.3" height="23" fill="#c4c4c4" stroke="#111" stroke-width="1"/><path d="M122 971V951H138" fill="none" stroke="#fff" stroke-width="1"/></g>
<g stroke="#1e1e1e" stroke-width="0.7"><rect x="621.8" y="413.9" width="3.4" height="16" fill="#4a4a4a"/><rect x="647.6" y="413.9" width="3.4" height="16" fill="#4a4a4a"/><path d="M619.500 429.500h8M645.500 429.500h8" stroke="#222" stroke-width="1.400"/><path d="M626 421.500Q626 413.200 636.400 413.200Q646.800 413.200 646.800 421.500Q646.800 428 640 428H632.500Q626 428 626 421.500Z" fill="#5c5c5c"/><path d="M631.500 408h10l1.500 6h-13z" fill="#5c5c5c"/><path d="M629 388.500Q629 386.800 631 386.800H642.700Q644.700 386.800 644.700 388.500V400Q644.700 408.300 640 408.300H633.500Q629 408.300 629 400Z" fill="#5c5c5c"/><path d="M631.800 390h3v14h-3zM639 390h3v14h-3z" fill="#008484" stroke="none"/><rect x="634.8" y="389" width="4.2" height="5.5" fill="#3c3c3c"/><rect x="634.8" y="397" width="4.2" height="4" fill="#3c3c3c"/><rect x="633" y="373.5" width="7.6" height="13.5" fill="#5c5c5c"/><ellipse cx="636.700" cy="370.500" rx="16.300" ry="4.600" fill="#5c5c5c"/><path d="M621.500 366.500Q621.500 363.200 626 363.200H647.400Q652 363.200 652 366.500Q652 369 647 369.500H626.500Q621.500 369 621.500 366.500Z" fill="#666"/><rect x="621" y="386.500" width="11" height="12.5" fill="#1c1c1c" stroke="#111" stroke-width="0.6"/><rect x="616" y="388" width="5" height="10" fill="#d8d8d8" stroke="#666" stroke-width="0.5"/><circle cx="618.500" cy="390.500" r="1.100" fill="#e02020" stroke="none"/><circle cx="618.500" cy="395.500" r="1.100" fill="#e02020" stroke="none"/><circle cx="629" cy="395" r="2" fill="#888" stroke="#ddd" stroke-width="0.6"/><path d="M619.500 387.500q0.500 -8 11 -9.500" fill="none" stroke="#eee" stroke-width="0.9"/></g>
<g fill="none" stroke-linejoin="round"><path d="M985 522.8H729.3A16 16 0 0 1 729.3 490.8H750" stroke="#808080" stroke-width="32" stroke-linecap="butt"/><path d="M985 522.8H729.3A16 16 0 0 1 729.3 490.8H750" stroke="#aeaeae" stroke-width="22.4" stroke-linecap="butt"/><path d="M729.3 522.8A16 16 0 0 1 729.3 490.8H750" stroke="#e6e6e6" stroke-width="10.200"/><path d="M985 522.8H734.3" stroke="#e6e6e6" stroke-width="14"/><circle cx="734.3" cy="522.8" r="7" fill="#e6e6e6" stroke="none"/><path d="M915.700 490.8H729.3A16.35 16.35 0 0 1 729.3 458.1H750" stroke="#808080" stroke-width="33" stroke-linecap="round"/><path d="M915.700 490.8H729.3A16.35 16.35 0 0 1 729.3 458.1H750" stroke="#aeaeae" stroke-width="23" stroke-linecap="round"/><path d="M729.3 490.8A16.35 16.35 0 0 1 729.3 458.1H750" stroke="#e6e6e6" stroke-width="10.400"/><path d="M915.700 490.8H734.3" stroke="#e6e6e6" stroke-width="14.400" stroke-linecap="round"/><path d="M915.700 458.1H729.3A16.35 16.35 0 0 1 729.3 425.4H750" stroke="#808080" stroke-width="33" stroke-linecap="round"/><path d="M915.700 458.1H729.3A16.35 16.35 0 0 1 729.3 425.4H750" stroke="#aeaeae" stroke-width="23" stroke-linecap="round"/><path d="M729.3 458.1A16.35 16.35 0 0 1 729.3 425.4H750" stroke="#e6e6e6" stroke-width="10.400"/><path d="M915.700 458.1H734.3" stroke="#e6e6e6" stroke-width="14.400" stroke-linecap="round"/><path d="M915.700 425.4H729.3A16.35 16.35 0 0 1 729.3 392.7H750" stroke="#808080" stroke-width="33" stroke-linecap="round"/><path d="M915.700 425.4H729.3A16.35 16.35 0 0 1 729.3 392.7H750" stroke="#aeaeae" stroke-width="23" stroke-linecap="round"/><path d="M729.3 425.4A16.35 16.35 0 0 1 729.3 392.7H750" stroke="#e6e6e6" stroke-width="10.400"/><path d="M915.700 425.4H734.3" stroke="#e6e6e6" stroke-width="14.400" stroke-linecap="round"/><path d="M915.700 392.7H729.3A16.35 16.35 0 0 1 729.3 360H750" stroke="#808080" stroke-width="33" stroke-linecap="round"/><path d="M915.700 392.7H729.3A16.35 16.35 0 0 1 729.3 360H750" stroke="#aeaeae" stroke-width="23" stroke-linecap="round"/><path d="M729.3 392.7A16.35 16.35 0 0 1 729.3 360H750" stroke="#e6e6e6" stroke-width="10.400"/><path d="M915.700 392.7H734.3" stroke="#e6e6e6" stroke-width="14.400" stroke-linecap="round"/><path d="M915.700 360H729.3A16.35 16.35 0 0 1 729.3 327.3H750" stroke="#808080" stroke-width="33" stroke-linecap="round"/><path d="M915.700 360H729.3A16.35 16.35 0 0 1 729.3 327.3H750" stroke="#aeaeae" stroke-width="23" stroke-linecap="round"/><path d="M729.3 360A16.35 16.35 0 0 1 729.3 327.3H750" stroke="#e6e6e6" stroke-width="10.400"/><path d="M915.700 360H734.3" stroke="#e6e6e6" stroke-width="14.400" stroke-linecap="round"/></g><g stroke="none"><path d="M985 277.9H729.3A32.95 32.95 0 0 0 729.3 343.8H915.700A16.5 16.5 0 0 0 915.700 310.8H735.8A3.15 3.15 0 0 1 735.8 304.5H985Z" fill="#808080"/><path d="M985 281.45H729.3A27.45 28.68 0 0 0 729.3 338.8H915.700A11.5 11.5 0 0 0 915.700 315.8H735.8A7.43 7.43 0 0 1 735.8 300.95H985Z" fill="#aeaeae"/><path d="M985 285.45H729.3A20.85 24.53 0 0 0 729.3 334.5H915.700A7.2 7.2 0 0 0 915.700 320.1H735.8A11.58 11.58 0 0 1 735.8 296.95H985Z" fill="#e6e6e6"/></g><path d="M731 343.7H917.500" stroke="#0c0c0c" stroke-width="1" fill="none"/><path d="M731 376.4H917.500" stroke="#0c0c0c" stroke-width="1" fill="none"/><path d="M731 409.1H917.500" stroke="#0c0c0c" stroke-width="1" fill="none"/><path d="M731 441.8H917.500" stroke="#0c0c0c" stroke-width="1" fill="none"/><path d="M731 474.5H917.500" stroke="#0c0c0c" stroke-width="1" fill="none"/><path d="M731 507.2H917.500" stroke="#0c0c0c" stroke-width="1" fill="none"/><ellipse cx="985.200" cy="291.200" rx="5.800" ry="13.300" fill="#6a6a6a"/><ellipse cx="983.200" cy="522.800" rx="7.400" ry="16" fill="#6a6a6a"/>
<g transform="translate(923,244.5)" stroke="#3c3c3c" stroke-width="0.8"><path d="M-14.500 -1.300h14.500v2.600h-14.500z" fill="#e0e0e0" stroke-width="0.5"/><path d="M-8.500 -15.500h17L0 0zM-8.500 15.500h17L0 0z" fill="url(#cylH2)"/><path d="M-14.500 -12.500v25q-13.500 -1 -13.500 -12.500q0 -11.500 13.500 -12.500z" fill="url(#domeV)"/></g>
<g transform="translate(1178,272)" stroke="#3c3c3c" stroke-width="0.8"><path d="M-14.500 -1.300h14.500v2.600h-14.500z" fill="#e0e0e0" stroke-width="0.5"/><path d="M-8.500 -15.500h17L0 0zM-8.500 15.500h17L0 0z" fill="url(#cylH2)"/><path d="M-14.500 -12.500v25q-13.500 -1 -13.500 -12.500q0 -11.500 13.500 -12.500z" fill="url(#domeV)"/></g>
<g transform="translate(1634.9,252.2)" stroke="#3c3c3c" stroke-width="0.8"><path d="M-14.500 -1.300h14.500v2.600h-14.500z" fill="#e0e0e0" stroke-width="0.5"/><path d="M-8.500 -15.500h17L0 0zM-8.500 15.500h17L0 0z" fill="url(#cylH2)"/><path d="M-14.500 -12.500v25q-13.500 -1 -13.500 -12.500q0 -11.500 13.500 -12.500z" fill="url(#domeV)"/></g>
<g transform="translate(1873.8,254)" stroke="#3c3c3c" stroke-width="0.8"><path d="M-14.500 -1.300h14.500v2.600h-14.500z" fill="#e0e0e0" stroke-width="0.5"/><path d="M-8.500 -15.500h17L0 0zM-8.500 15.500h17L0 0z" fill="url(#cylH2)"/><path d="M-14.500 -12.500v25q-13.500 -1 -13.500 -12.500q0 -11.500 13.500 -12.500z" fill="url(#domeV)"/></g>
<g transform="translate(1380,660.3)" stroke="#3c3c3c" stroke-width="0.8"><path d="M-1.300 -17h2.600v17h-2.600z" fill="#e0e0e0" stroke-width="0.5"/><path d="M-17.500 -9.300v18.600L0 0zM17.500 -9.300v18.600L0 0z" fill="url(#cylV2)"/><path d="M-15 -17h30q-1 -15.500 -15 -15.500q-14 0 -15 15.500z" fill="url(#domeH)"/></g>
<g transform="translate(1598,660.3)" stroke="#3c3c3c" stroke-width="0.8"><path d="M-1.300 -17h2.600v17h-2.600z" fill="#e0e0e0" stroke-width="0.5"/><path d="M-17.500 -9.300v18.600L0 0zM17.500 -9.300v18.600L0 0z" fill="url(#cylV2)"/><path d="M-15 -17h30q-1 -15.500 -15 -15.500q-14 0 -15 15.500z" fill="url(#domeH)"/></g>
<g><rect x="1173" y="435.5" width="12.4" height="45.5" fill="#4e4e4e"/><rect x="1169.5" y="480.5" width="19.4" height="3.5" fill="#4a4a4a"/><rect x="1226.8" y="435.5" width="13" height="45.5" fill="#4e4e4e"/><rect x="1223.3" y="480.5" width="20" height="3.5" fill="#4a4a4a"/><path d="M1143.2 312.13L1151.5 302.5Q1206.1 297.5 1260.7 302.5L1269 312.13L1269 432.87L1260.7 440.5Q1206.1 446.5 1151.5 440.5L1143.2 432.87Z" fill="url(#tankH)" stroke="#5a5a5a" stroke-width="0.6"/><path d="M1144.2 313.13Q1206.1 305.13 1268 313.13" fill="none" stroke="#ffffff" stroke-width="1" opacity="0.55"/><path d="M1144.2 432.37Q1206.1 442.37 1268 432.37" fill="none" stroke="#ffffff" stroke-width="1" opacity="0.45"/><rect x="1145.5" y="302.5" width="43.5" height="133.5" fill="url(#dith)" opacity="0.92"/><rect x="1150.4" y="436.5" width="15" height="53.1" fill="url(#legH)" stroke="#222" stroke-width="0.8"/><rect x="1147.2" y="489.4" width="21.4" height="3.2" fill="#b8b8b8" stroke="#222" stroke-width="0.8"/><rect x="1247.6" y="436.5" width="15.2" height="53.1" fill="url(#legH)" stroke="#222" stroke-width="0.8"/><rect x="1244.4" y="489.4" width="21.6" height="3.2" fill="#b8b8b8" stroke="#222" stroke-width="0.8"/></g>
<g><path d="M1167.4 353.52L1182.36 382.08L1152.44 382.08Z" fill="#efbe3c" stroke="#e0962a" stroke-width="2.55" stroke-linejoin="round"/><path d="M1167.4 357.94L1177.6 380.04L1157.2 380.04Z" fill="#f7e47a" opacity="0.6"/><rect x="1165.7" y="362.7" width="3.4" height="11.22" rx="1.53" fill="#333"/><circle cx="1167.4" cy="377.66" r="2.04" fill="#333"/></g>
<g transform="translate(1099.9,565)" stroke-linejoin="round"><path d="M10.56 35L12.94 32.9L17.79 32.9L19.84 35Z" fill="#222"/><path d="M35.9 35L38.27 32.55L42.58 32.55L45.06 35Z" fill="#222"/><rect x="18" y="26.78" width="25.76" height="3.6" fill="#8c8c8c"/><rect x="18" y="21.25" width="23.12" height="5.53" fill="#5e5e5e" stroke="#111" stroke-width="0.9"/><path d="M43.77 1.65L51.2 3.71L51.2 28.73L43.77 30.38Z" fill="url(#motV)" stroke="#111" stroke-width="0.9"/><rect x="17.3" y="0.7" width="26.46" height="20.65" fill="url(#motV)" stroke="#111" stroke-width="0.6"/><rect x="17.3" y="0.7" width="26.46" height="3.15" fill="#acacac"/><rect x="18" y="3.85" width="24.15" height="0.77" fill="#555555"/><rect x="18" y="6.3" width="24.15" height="0.77" fill="#555555"/><rect x="18" y="8.4" width="24.15" height="1.4" fill="#555555"/><rect x="18" y="10.96" width="24.15" height="1.4" fill="#555555"/><rect x="18" y="14.35" width="24.15" height="1.75" fill="#555555"/><path d="M0 2.24L17.3 0L17.3 32.9L0 30.91Z" fill="url(#motV)" stroke="#111" stroke-width="0.9"/><rect x="51.42" y="2.45" width="2.48" height="28.18" fill="url(#motV)" stroke="#111" stroke-width="0.9"/><rect x="23.34" y="22.82" width="13.26" height="10.78" fill="#c4c4c4" stroke="#111" stroke-width="1"/><rect x="23.99" y="23.28" width="11.97" height="1.05" fill="#f4f4f4"/></g>
<g transform="translate(1099.9,551.1)" stroke="#111" stroke-width="0.8"><rect x="53.9" y="25" width="10.2" height="7.8" fill="#e4e4e4"/><path d="M56.500 27q2.500 3 5 0M56.500 31q2.500 -3 5 0" fill="none" stroke="#111" stroke-width="0.8"/><rect x="71" y="2.7" width="8.8" height="10.5" fill="url(#cylH2)" stroke="#333" stroke-width="0.6"/><rect x="68.4" y="0" width="13.8" height="2.7" fill="#dcdcdc"/><rect x="85" y="16.6" width="6.8" height="24.7" fill="url(#cylV2)" stroke="#111" stroke-width="0.8" rx="1"/><path d="M67.100 12.400H80.800Q85.800 12.400 85.800 17.400V40.200Q85.800 45.200 80.800 45.200H67.100Z" fill="url(#cylV2)"/><rect x="64.1" y="10.3" width="3" height="38.2" fill="url(#cylV2)"/></g>
<g><rect x="1409.3" y="838.5" width="15.1" height="50" fill="#4e4e4e"/><rect x="1405.8" y="888" width="22.1" height="3.5" fill="#4a4a4a"/><rect x="1475.5" y="838.5" width="15.5" height="50" fill="#4e4e4e"/><rect x="1472" y="888" width="22.5" height="3.5" fill="#4a4a4a"/><path d="M1373.3 696.66L1383.44 685Q1450.15 680 1516.86 685L1527 696.66L1527 833.84L1516.86 843.5Q1450.15 849.5 1383.44 843.5L1373.3 833.84Z" fill="url(#tankH)" stroke="#5a5a5a" stroke-width="0.6"/><path d="M1374.3 697.66Q1450.15 689.66 1526 697.66" fill="none" stroke="#ffffff" stroke-width="1" opacity="0.55"/><path d="M1374.3 833.34Q1450.15 843.34 1526 833.34" fill="none" stroke="#ffffff" stroke-width="1" opacity="0.45"/><rect x="1381" y="839.5" width="20" height="58.5" fill="url(#legH)" stroke="#222" stroke-width="0.8"/><rect x="1377.8" y="897.8" width="26.4" height="3.2" fill="#b8b8b8" stroke="#222" stroke-width="0.8"/><rect x="1500.4" y="839.5" width="19.1" height="58.5" fill="url(#legH)" stroke="#222" stroke-width="0.8"/><rect x="1497.2" y="897.8" width="25.5" height="3.2" fill="#b8b8b8" stroke="#222" stroke-width="0.8"/></g>
<g><rect x="1656" y="850" width="20.8" height="55.8" fill="#4e4e4e"/><rect x="1652.5" y="905.3" width="27.8" height="3.5" fill="#4a4a4a"/><rect x="1743" y="850" width="20.8" height="55.8" fill="#4e4e4e"/><rect x="1739.5" y="905.3" width="27.8" height="3.5" fill="#4a4a4a"/><path d="M1610 696.02L1623.2 681Q1710 676 1796.8 681L1810 696.02L1810 841.98L1796.8 855Q1710 861 1623.2 855L1610 841.98Z" fill="url(#tankH)" stroke="#5a5a5a" stroke-width="0.6"/><path d="M1611 697.02Q1710 689.02 1809 697.02" fill="none" stroke="#ffffff" stroke-width="1" opacity="0.55"/><path d="M1611 841.48Q1710 851.48 1809 841.48" fill="none" stroke="#ffffff" stroke-width="1" opacity="0.45"/><rect x="1767" y="681" width="43" height="169.5" fill="url(#dith)" opacity="0.92"/><rect x="1621" y="851" width="24.5" height="65.5" fill="url(#legH)" stroke="#222" stroke-width="0.8"/><rect x="1617.8" y="916.3" width="30.9" height="3.2" fill="#b8b8b8" stroke="#222" stroke-width="0.8"/><rect x="1775.8" y="851" width="24.2" height="65.5" fill="url(#legH)" stroke="#222" stroke-width="0.8"/><rect x="1772.6" y="916.3" width="30.6" height="3.2" fill="#b8b8b8" stroke="#222" stroke-width="0.8"/></g>
<g><path d="M1788.6 751.2L1804 780.6L1773.2 780.6Z" fill="#efbe3c" stroke="#e0962a" stroke-width="2.62" stroke-linejoin="round"/><path d="M1788.6 755.75L1799.1 778.5L1778.1 778.5Z" fill="#f7e47a" opacity="0.6"/><rect x="1786.85" y="760.65" width="3.5" height="11.55" rx="1.57" fill="#333"/><circle cx="1788.6" cy="776.05" r="2.1" fill="#333"/></g>
<g transform="translate(1825,971.2) scale(-1,1)" stroke-linejoin="round"><path d="M10.56 35L12.94 32.9L17.79 32.9L19.84 35Z" fill="#222"/><path d="M35.9 35L38.27 32.55L42.58 32.55L45.06 35Z" fill="#222"/><rect x="18" y="26.78" width="25.76" height="3.6" fill="#8c8c8c"/><rect x="18" y="21.25" width="23.12" height="5.53" fill="#5e5e5e" stroke="#111" stroke-width="0.9"/><path d="M43.77 1.65L51.2 3.71L51.2 28.73L43.77 30.38Z" fill="url(#motV)" stroke="#111" stroke-width="0.9"/><rect x="17.3" y="0.7" width="26.46" height="20.65" fill="url(#motV)" stroke="#111" stroke-width="0.6"/><rect x="17.3" y="0.7" width="26.46" height="3.15" fill="#acacac"/><rect x="18" y="3.85" width="24.15" height="0.77" fill="#555555"/><rect x="18" y="6.3" width="24.15" height="0.77" fill="#555555"/><rect x="18" y="8.4" width="24.15" height="1.4" fill="#555555"/><rect x="18" y="10.96" width="24.15" height="1.4" fill="#555555"/><rect x="18" y="14.35" width="24.15" height="1.75" fill="#555555"/><path d="M0 2.24L17.3 0L17.3 32.9L0 30.91Z" fill="url(#motV)" stroke="#111" stroke-width="0.9"/><rect x="51.42" y="2.45" width="2.48" height="28.18" fill="url(#motV)" stroke="#111" stroke-width="0.9"/><rect x="23.34" y="22.82" width="13.26" height="10.78" fill="#c4c4c4" stroke="#111" stroke-width="1"/><rect x="23.99" y="23.28" width="11.97" height="1.05" fill="#f4f4f4"/></g>
<g transform="translate(1825,957.3) scale(-1,1)" stroke="#111" stroke-width="0.8"><rect x="53.9" y="25" width="10.2" height="7.8" fill="#e4e4e4"/><path d="M56.500 27q2.500 3 5 0M56.500 31q2.500 -3 5 0" fill="none" stroke="#111" stroke-width="0.8"/><rect x="71" y="2.7" width="8.8" height="10.5" fill="url(#cylH2)" stroke="#333" stroke-width="0.6"/><rect x="68.4" y="0" width="13.8" height="2.7" fill="#dcdcdc"/><rect x="85" y="16.6" width="6.8" height="24.7" fill="url(#cylV2)" stroke="#111" stroke-width="0.8" rx="1"/><path d="M67.100 12.400H80.800Q85.800 12.400 85.800 17.400V40.200Q85.800 45.200 80.800 45.200H67.100Z" fill="url(#cylV2)"/><rect x="64.1" y="10.3" width="3" height="38.2" fill="url(#cylV2)"/></g>
<g transform="translate(1442.3,301.2)" stroke-linejoin="round"><path d="M14.21 42.8L17.4 40.23L23.93 40.23L26.68 42.8Z" fill="#222"/><path d="M48.29 42.8L51.47 39.8L57.28 39.8L60.61 42.8Z" fill="#222"/><rect x="24.21" y="32.74" width="34.66" height="4.41" fill="#8c8c8c"/><rect x="24.21" y="25.98" width="31.1" height="6.76" fill="#5e5e5e" stroke="#111" stroke-width="0.9"/><path d="M58.87 2.01L68.88 4.54L68.88 35.14L58.87 37.15Z" fill="url(#motV)" stroke="#111" stroke-width="0.9"/><rect x="23.27" y="0.86" width="35.6" height="25.25" fill="url(#motV)" stroke="#111" stroke-width="0.6"/><rect x="23.27" y="0.86" width="35.6" height="3.85" fill="#acacac"/><rect x="24.21" y="4.71" width="32.48" height="0.94" fill="#555555"/><rect x="24.21" y="7.7" width="32.48" height="0.94" fill="#555555"/><rect x="24.21" y="10.27" width="32.48" height="1.71" fill="#555555"/><rect x="24.21" y="13.4" width="32.48" height="1.71" fill="#555555"/><rect x="24.21" y="17.55" width="32.48" height="2.14" fill="#555555"/><path d="M0 2.74L23.27 0L23.27 40.23L0 37.79Z" fill="url(#motV)" stroke="#111" stroke-width="0.9"/><rect x="69.16" y="3" width="3.33" height="34.45" fill="url(#motV)" stroke="#111" stroke-width="0.9"/><rect x="72.5" y="14.21" width="13" height="10.66" fill="url(#cylV2)" stroke="#222" stroke-width="0.6"/><rect x="31.39" y="27.91" width="17.84" height="13.18" fill="#c4c4c4" stroke="#111" stroke-width="1"/><rect x="32.26" y="28.46" width="16.09" height="1.28" fill="#f4f4f4"/></g>
<g stroke="#3a3a3a" stroke-width="0.7"><rect x="1527.3" y="306.3" width="7.3" height="33.4" fill="#b4b4b4"/><rect x="1589" y="306.3" width="7" height="33.4" fill="#b4b4b4"/><rect x="1534.6" y="346" width="13" height="36.5" fill="#b4b4b4"/><path d="M1549.6 346H1589L1583.6 372.4H1556.4Z" fill="#6e6e6e"/><rect x="1534.6" y="297" width="54.4" height="49.2" fill="#6e6e6e"/></g>
<g transform="translate(1679.1,301.2)" stroke-linejoin="round"><path d="M14.21 42.8L17.4 40.23L23.93 40.23L26.68 42.8Z" fill="#222"/><path d="M48.29 42.8L51.47 39.8L57.28 39.8L60.61 42.8Z" fill="#222"/><rect x="24.21" y="32.74" width="34.66" height="4.41" fill="#8c8c8c"/><rect x="24.21" y="25.98" width="31.1" height="6.76" fill="#5e5e5e" stroke="#111" stroke-width="0.9"/><path d="M58.87 2.01L68.88 4.54L68.88 35.14L58.87 37.15Z" fill="url(#motV)" stroke="#111" stroke-width="0.9"/><rect x="23.27" y="0.86" width="35.6" height="25.25" fill="url(#motV)" stroke="#111" stroke-width="0.6"/><rect x="23.27" y="0.86" width="35.6" height="3.85" fill="#acacac"/><rect x="24.21" y="4.71" width="32.48" height="0.94" fill="#555555"/><rect x="24.21" y="7.7" width="32.48" height="0.94" fill="#555555"/><rect x="24.21" y="10.27" width="32.48" height="1.71" fill="#555555"/><rect x="24.21" y="13.4" width="32.48" height="1.71" fill="#555555"/><rect x="24.21" y="17.55" width="32.48" height="2.14" fill="#555555"/><path d="M0 2.74L23.27 0L23.27 40.23L0 37.79Z" fill="url(#motV)" stroke="#111" stroke-width="0.9"/><rect x="69.16" y="3" width="3.33" height="34.45" fill="url(#motV)" stroke="#111" stroke-width="0.9"/><rect x="72.5" y="14.21" width="13" height="10.66" fill="url(#cylV2)" stroke="#222" stroke-width="0.6"/><rect x="31.39" y="27.91" width="17.84" height="13.18" fill="#c4c4c4" stroke="#111" stroke-width="1"/><rect x="32.26" y="28.46" width="16.09" height="1.28" fill="#f4f4f4"/></g>
<g stroke="#3a3a3a" stroke-width="0.7"><rect x="1764.2" y="306.3" width="7.3" height="33.4" fill="#b4b4b4"/><rect x="1825.9" y="306.3" width="7" height="33.4" fill="#b4b4b4"/><rect x="1771.5" y="346" width="13" height="36.5" fill="#b4b4b4"/><path d="M1786.5 346H1825.9L1820.5 372.4H1793.3Z" fill="#6e6e6e"/><rect x="1771.5" y="297" width="54.4" height="49.2" fill="#6e6e6e"/></g>
<g transform="translate(1394.1,445)" stroke-linejoin="round"><path d="M14.21 42.8L17.4 40.23L23.93 40.23L26.68 42.8Z" fill="#222"/><path d="M48.29 42.8L51.47 39.8L57.28 39.8L60.61 42.8Z" fill="#222"/><rect x="24.21" y="32.74" width="34.66" height="4.41" fill="#8c8c8c"/><rect x="24.21" y="25.98" width="31.1" height="6.76" fill="#5e5e5e" stroke="#111" stroke-width="0.9"/><path d="M58.87 2.01L68.88 4.54L68.88 35.14L58.87 37.15Z" fill="url(#motV)" stroke="#111" stroke-width="0.9"/><rect x="23.27" y="0.86" width="35.6" height="25.25" fill="url(#motV)" stroke="#111" stroke-width="0.6"/><rect x="23.27" y="0.86" width="35.6" height="3.85" fill="#acacac"/><rect x="24.21" y="4.71" width="32.48" height="0.94" fill="#555555"/><rect x="24.21" y="7.7" width="32.48" height="0.94" fill="#555555"/><rect x="24.21" y="10.27" width="32.48" height="1.71" fill="#555555"/><rect x="24.21" y="13.4" width="32.48" height="1.71" fill="#555555"/><rect x="24.21" y="17.55" width="32.48" height="2.14" fill="#555555"/><path d="M0 2.74L23.27 0L23.27 40.23L0 37.79Z" fill="url(#motV)" stroke="#111" stroke-width="0.9"/><rect x="69.16" y="3" width="3.33" height="34.45" fill="url(#motV)" stroke="#111" stroke-width="0.9"/><rect x="72.5" y="14.21" width="13" height="10.66" fill="url(#cylV2)" stroke="#222" stroke-width="0.6"/><rect x="31.39" y="27.91" width="17.84" height="13.18" fill="#c4c4c4" stroke="#111" stroke-width="1"/><rect x="32.26" y="28.46" width="16.09" height="1.28" fill="#f4f4f4"/></g>
<g stroke="#3a3a3a" stroke-width="0.7"><rect x="1479.2" y="449.8" width="7.3" height="33.4" fill="#b4b4b4"/><rect x="1540.9" y="449.8" width="7" height="33.4" fill="#b4b4b4"/><rect x="1486.5" y="489.5" width="13" height="36.5" fill="#b4b4b4"/><path d="M1501.5 489.5H1540.9L1535.5 515.9H1508.3Z" fill="#6e6e6e"/><rect x="1486.5" y="440.5" width="54.4" height="49.2" fill="#6e6e6e"/></g>
<g transform="translate(1631.3,445)" stroke-linejoin="round"><path d="M14.21 42.8L17.4 40.23L23.93 40.23L26.68 42.8Z" fill="#222"/><path d="M48.29 42.8L51.47 39.8L57.28 39.8L60.61 42.8Z" fill="#222"/><rect x="24.21" y="32.74" width="34.66" height="4.41" fill="#8c8c8c"/><rect x="24.21" y="25.98" width="31.1" height="6.76" fill="#5e5e5e" stroke="#111" stroke-width="0.9"/><path d="M58.87 2.01L68.88 4.54L68.88 35.14L58.87 37.15Z" fill="url(#motV)" stroke="#111" stroke-width="0.9"/><rect x="23.27" y="0.86" width="35.6" height="25.25" fill="url(#motV)" stroke="#111" stroke-width="0.6"/><rect x="23.27" y="0.86" width="35.6" height="3.85" fill="#acacac"/><rect x="24.21" y="4.71" width="32.48" height="0.94" fill="#555555"/><rect x="24.21" y="7.7" width="32.48" height="0.94" fill="#555555"/><rect x="24.21" y="10.27" width="32.48" height="1.71" fill="#555555"/><rect x="24.21" y="13.4" width="32.48" height="1.71" fill="#555555"/><rect x="24.21" y="17.55" width="32.48" height="2.14" fill="#555555"/><path d="M0 2.74L23.27 0L23.27 40.23L0 37.79Z" fill="url(#motV)" stroke="#111" stroke-width="0.9"/><rect x="69.16" y="3" width="3.33" height="34.45" fill="url(#motV)" stroke="#111" stroke-width="0.9"/><rect x="72.5" y="14.21" width="13" height="10.66" fill="url(#cylV2)" stroke="#222" stroke-width="0.6"/><rect x="31.39" y="27.91" width="17.84" height="13.18" fill="#c4c4c4" stroke="#111" stroke-width="1"/><rect x="32.26" y="28.46" width="16.09" height="1.28" fill="#f4f4f4"/></g>
<g stroke="#3a3a3a" stroke-width="0.7"><rect x="1716.4" y="449.8" width="7.3" height="33.4" fill="#b4b4b4"/><rect x="1778.1" y="449.8" width="7" height="33.4" fill="#b4b4b4"/><rect x="1723.7" y="489.5" width="13" height="36.5" fill="#b4b4b4"/><path d="M1738.7 489.5H1778.1L1772.7 515.9H1745.5Z" fill="#6e6e6e"/><rect x="1723.7" y="440.5" width="54.4" height="49.2" fill="#6e6e6e"/></g>
<g><rect x="1394" y="561" width="435" height="21" fill="#e8e8e8" stroke="#808080" stroke-width="0.9"/><g stroke="#4e4e4e" stroke-width="0.7" clip-path="url(#scClip)"><path d="M1377.6 562.5L1404.6 580.5H1397.6L1372.6 565.5Z" fill="#a2a2a2"/><path d="M1350.4 580.5L1377.6 562.5H1368.6L1341.4 580.5Z" fill="#f6f6f6"/><path d="M1431.8 562.5L1458.8 580.5H1451.8L1426.8 565.5Z" fill="#a2a2a2"/><path d="M1404.6 580.5L1431.8 562.5H1422.8L1395.6 580.5Z" fill="#f6f6f6"/><path d="M1486 562.5L1513 580.5H1506L1481 565.5Z" fill="#a2a2a2"/><path d="M1458.8 580.5L1486 562.5H1477L1449.8 580.5Z" fill="#f6f6f6"/><path d="M1540.2 562.5L1567.2 580.5H1560.2L1535.2 565.5Z" fill="#a2a2a2"/><path d="M1513 580.5L1540.2 562.5H1531.2L1504 580.5Z" fill="#f6f6f6"/><path d="M1594.4 562.5L1621.4 580.5H1614.4L1589.4 565.5Z" fill="#a2a2a2"/><path d="M1567.2 580.5L1594.4 562.5H1585.4L1558.2 580.5Z" fill="#f6f6f6"/><path d="M1648.6 562.5L1675.6 580.5H1668.6L1643.6 565.5Z" fill="#a2a2a2"/><path d="M1621.4 580.5L1648.6 562.5H1639.6L1612.4 580.5Z" fill="#f6f6f6"/><path d="M1702.8 562.5L1729.8 580.5H1722.8L1697.8 565.5Z" fill="#a2a2a2"/><path d="M1675.6 580.5L1702.8 562.5H1693.8L1666.6 580.5Z" fill="#f6f6f6"/><path d="M1757 562.5L1784 580.5H1777L1752 565.5Z" fill="#a2a2a2"/><path d="M1729.8 580.5L1757 562.5H1748L1720.8 580.5Z" fill="#f6f6f6"/><path d="M1811.2 562.5L1838.2 580.5H1831.2L1806.2 565.5Z" fill="#a2a2a2"/><path d="M1784 580.5L1811.2 562.5H1802.2L1775 580.5Z" fill="#f6f6f6"/></g></g>
<g transform="translate(1892.4,550.8) scale(-1,1)" stroke-linejoin="round"><rect x="58.39" y="9.82" width="3.01" height="20.1" fill="#050505"/><rect x="13.94" y="40.35" width="33.4" height="4.22" fill="#050505"/><rect x="53.23" y="5.32" width="5.16" height="30.29" fill="url(#motV)" stroke="#111" stroke-width="0.8" rx="2"/><rect x="0" y="0" width="53.23" height="41.17" fill="url(#motV)" stroke="#111" stroke-width="0.9" rx="3"/><rect x="13.94" y="1.38" width="35.8" height="0.92" fill="#555555"/><rect x="13.94" y="3.9" width="35.8" height="1.38" fill="#555555"/><rect x="13.94" y="6.43" width="35.8" height="1.38" fill="#555555"/><rect x="13.94" y="9.18" width="35.8" height="1.93" fill="#555555"/><rect x="13.94" y="12.76" width="35.8" height="1.93" fill="#555555"/><rect x="13.94" y="16.39" width="35.8" height="1.93" fill="#555555"/><rect x="13.94" y="20.01" width="35.8" height="1.93" fill="#555555"/><rect x="16.39" y="25.8" width="17.99" height="20.1" fill="#bcbcbc" stroke="#111" stroke-width="1.1"/><path d="M18.11 44.06V27.54H30.7" fill="none" stroke="#fff" stroke-width="1"/></g>
<g fill="none" stroke-linecap="butt"><path d="M1848.200 385L1899 462.500V466H1896L1848.200 393Z" fill="#a8a8a8" stroke="#f0f0f0" stroke-width="0.9"/><path d="M1848.200 389L1897.500 464" stroke="#5a5a5a" stroke-width="1.200" stroke-dasharray="1.500 2.500"/><path d="M1848.2 366V465.500" stroke="#f0f0f0" stroke-width="1.100"/><path d="M1849.3 366V465.500" stroke="#444" stroke-width="0.700"/><path d="M1874.6 402V465.500" stroke="#f0f0f0" stroke-width="1.100"/><path d="M1875.7 402V465.500" stroke="#444" stroke-width="0.700"/><path d="M1899 437V465.500" stroke="#f0f0f0" stroke-width="1.100"/><path d="M1900.1 437V465.500" stroke="#444" stroke-width="0.700"/><path d="M1872 402V465.500" stroke="#f0f0f0" stroke-width="0.9"/><path d="M1848.200 366.500L1899 437" stroke="#f0f0f0" stroke-width="1.200"/><path d="M1849.400 366.500L1900.200 437" stroke="#3c3c3c" stroke-width="0.7"/><path d="M1848.200 379L1899 450" stroke="#f0f0f0" stroke-width="1.100"/><path d="M1849.300 379L1900 450" stroke="#3c3c3c" stroke-width="0.6"/><path d="M1848.200 431H1874.600" stroke="#f0f0f0" stroke-width="3.200"/><path d="M1849 431.400H1874" stroke="#a0a0a0" stroke-width="1.400"/></g>
<g><rect x="908.25" y="747.3" width="153.45" height="9.4" fill="#d2d2d2" stroke="#111" stroke-width="0.9"/><rect x="913.9" y="720.4" width="7.5" height="5.85" fill="url(#cylV2)" stroke="#333" stroke-width="0.5"/><rect x="908.25" y="709.2" width="5.65" height="28.3" fill="url(#cylV2)" stroke="#111" stroke-width="0.9"/><rect x="927.2" y="697" width="7.7" height="10" fill="url(#cylH2)" stroke="#333" stroke-width="0.6"/><rect x="917.2" y="695" width="26.7" height="3.9" fill="#dcdcdc" stroke="#111" stroke-width="0.9"/><rect x="930.5" y="739" width="13.4" height="7.9" fill="#c0c0c0" stroke="#111" stroke-width="0.9"/><rect x="921.4" y="706.4" width="32.5" height="34.1" fill="url(#motV)" stroke="#111" stroke-width="0.9" rx="1.500"/><rect x="946.7" y="707" width="0.01" height="33" fill="none" stroke="#444" stroke-width="0.8"/><rect x="925" y="709.4" width="13" height="6.1" fill="#c4c4c4" stroke="#111" stroke-width="0.9"/><rect x="948.3" y="715" width="3.45" height="6.6" fill="#d8d8d8" stroke="#111" stroke-width="0.9"/><rect x="955.3" y="708" width="8.45" height="4.7" fill="none" stroke="#222" stroke-width="1" rx="2"/><rect x="972.7" y="738.4" width="2.8" height="8.5" fill="#f0f0f0" stroke="#333" stroke-width="0.7"/><rect x="955.25" y="738.6" width="27.7" height="2.6" fill="#e8e8e8" stroke="#333" stroke-width="0.6"/><rect x="957.2" y="733" width="24.4" height="6.4" fill="#d4d4d4"/><rect x="954.2" y="712.2" width="31.6" height="22.5" fill="url(#motV)" stroke="#333" stroke-width="0.7" rx="1.500"/><rect x="985.8" y="715" width="2.8" height="16.9" fill="#0a0a0a"/><rect x="988.4" y="709.6" width="32.35" height="37.4" fill="url(#guardV)" stroke="#111" stroke-width="0.9"/><rect x="1029.8" y="734.7" width="22.5" height="12.3" fill="#bcbcbc" stroke="#111" stroke-width="0.9"/><rect x="1020.75" y="712" width="3" height="14" fill="#0a0a0a"/><rect x="1029.4" y="730.5" width="11" height="3.6" fill="#0a0a0a"/><rect x="1021.9" y="709.6" width="5.5" height="18.1" fill="url(#motV)" stroke="#222" stroke-width="0.7" rx="2"/><rect x="1026.6" y="706.1" width="35.1" height="25.3" fill="url(#motV)" stroke="#111" stroke-width="0.9" rx="4"/><rect x="1028.25" y="707.8" width="23.6" height="0.8" fill="#555"/><rect x="1028.25" y="710" width="23.6" height="2.6" fill="#555"/><rect x="1028.25" y="714" width="23.6" height="0.8" fill="#555"/><rect x="1028.25" y="716.2" width="23.6" height="2.5" fill="#555"/><rect x="1039.7" y="722.5" width="11.05" height="11.25" fill="#c0c0c0" stroke="#111" stroke-width="1"/><rect x="1049.25" y="723.2" width="1" height="9.8" fill="#fff"/></g>
<g><rect x="908.1" y="857.24" width="137.6" height="8.26" fill="#d2d2d2" stroke="#111" stroke-width="0.9"/><rect x="913.17" y="833.61" width="6.73" height="5.14" fill="url(#cylV2)" stroke="#333" stroke-width="0.5"/><rect x="908.1" y="823.77" width="5.07" height="24.86" fill="url(#cylV2)" stroke="#111" stroke-width="0.9"/><rect x="925.09" y="813.06" width="6.9" height="8.78" fill="url(#cylH2)" stroke="#333" stroke-width="0.6"/><rect x="916.13" y="811.3" width="23.94" height="3.43" fill="#dcdcdc" stroke="#111" stroke-width="0.9"/><rect x="928.05" y="849.95" width="12.02" height="6.94" fill="#c0c0c0" stroke="#111" stroke-width="0.9"/><rect x="919.89" y="821.31" width="29.14" height="29.95" fill="url(#motV)" stroke="#111" stroke-width="0.9" rx="1.500"/><rect x="942.58" y="821.84" width="0.01" height="28.99" fill="none" stroke="#444" stroke-width="0.8"/><rect x="923.12" y="823.95" width="11.66" height="5.36" fill="#c4c4c4" stroke="#111" stroke-width="0.9"/><rect x="944.01" y="828.87" width="3.09" height="5.8" fill="#d8d8d8" stroke="#111" stroke-width="0.9"/><rect x="950.29" y="822.72" width="7.58" height="4.13" fill="none" stroke="#222" stroke-width="1" rx="2"/><rect x="965.89" y="849.42" width="2.51" height="7.47" fill="#f0f0f0" stroke="#333" stroke-width="0.7"/><rect x="950.25" y="849.6" width="24.84" height="2.28" fill="#e8e8e8" stroke="#333" stroke-width="0.6"/><rect x="951.99" y="844.68" width="21.88" height="5.62" fill="#d4d4d4"/><rect x="949.3" y="826.41" width="28.34" height="19.76" fill="url(#motV)" stroke="#333" stroke-width="0.7" rx="1.500"/><rect x="977.64" y="828.87" width="2.51" height="14.85" fill="#0a0a0a"/><rect x="979.97" y="824.13" width="29.01" height="32.85" fill="url(#guardV)" stroke="#111" stroke-width="0.9"/><rect x="1017.09" y="846.17" width="20.18" height="10.8" fill="#bcbcbc" stroke="#111" stroke-width="0.9"/><rect x="1008.98" y="826.23" width="2.69" height="12.3" fill="#0a0a0a"/><rect x="1016.74" y="842.48" width="9.86" height="3.16" fill="#0a0a0a"/><rect x="1010.01" y="824.13" width="4.93" height="15.9" fill="url(#motV)" stroke="#222" stroke-width="0.7" rx="2"/><rect x="1014.23" y="821.05" width="31.47" height="22.22" fill="url(#motV)" stroke="#111" stroke-width="0.9" rx="4"/><rect x="1015.71" y="822.54" width="21.16" height="0.7" fill="#555"/><rect x="1015.71" y="824.48" width="21.16" height="2.28" fill="#555"/><rect x="1015.71" y="827.99" width="21.16" height="0.7" fill="#555"/><rect x="1015.71" y="829.92" width="21.16" height="2.2" fill="#555"/><rect x="1025.97" y="835.46" width="9.91" height="9.88" fill="#c0c0c0" stroke="#111" stroke-width="1"/><rect x="1034.54" y="836.07" width="0.9" height="8.61" fill="#fff"/></g>
<g><rect x="908.1" y="963.74" width="137.6" height="8.26" fill="#d2d2d2" stroke="#111" stroke-width="0.9"/><rect x="913.17" y="940.11" width="6.73" height="5.14" fill="url(#cylV2)" stroke="#333" stroke-width="0.5"/><rect x="908.1" y="930.27" width="5.07" height="24.86" fill="url(#cylV2)" stroke="#111" stroke-width="0.9"/><rect x="925.09" y="919.56" width="6.9" height="8.78" fill="url(#cylH2)" stroke="#333" stroke-width="0.6"/><rect x="916.13" y="917.8" width="23.94" height="3.43" fill="#dcdcdc" stroke="#111" stroke-width="0.9"/><rect x="928.05" y="956.45" width="12.02" height="6.94" fill="#c0c0c0" stroke="#111" stroke-width="0.9"/><rect x="919.89" y="927.81" width="29.14" height="29.95" fill="url(#motV)" stroke="#111" stroke-width="0.9" rx="1.500"/><rect x="942.58" y="928.34" width="0.01" height="28.99" fill="none" stroke="#444" stroke-width="0.8"/><rect x="923.12" y="930.45" width="11.66" height="5.36" fill="#c4c4c4" stroke="#111" stroke-width="0.9"/><rect x="944.01" y="935.37" width="3.09" height="5.8" fill="#d8d8d8" stroke="#111" stroke-width="0.9"/><rect x="950.29" y="929.22" width="7.58" height="4.13" fill="none" stroke="#222" stroke-width="1" rx="2"/><rect x="965.89" y="955.92" width="2.51" height="7.47" fill="#f0f0f0" stroke="#333" stroke-width="0.7"/><rect x="950.25" y="956.1" width="24.84" height="2.28" fill="#e8e8e8" stroke="#333" stroke-width="0.6"/><rect x="951.99" y="951.18" width="21.88" height="5.62" fill="#d4d4d4"/><rect x="949.3" y="932.91" width="28.34" height="19.76" fill="url(#motV)" stroke="#333" stroke-width="0.7" rx="1.500"/><rect x="977.64" y="935.37" width="2.51" height="14.85" fill="#0a0a0a"/><rect x="979.97" y="930.63" width="29.01" height="32.85" fill="url(#guardV)" stroke="#111" stroke-width="0.9"/><rect x="1017.09" y="952.67" width="20.18" height="10.8" fill="#bcbcbc" stroke="#111" stroke-width="0.9"/><rect x="1008.98" y="932.73" width="2.69" height="12.3" fill="#0a0a0a"/><rect x="1016.74" y="948.98" width="9.86" height="3.16" fill="#0a0a0a"/><rect x="1010.01" y="930.63" width="4.93" height="15.9" fill="url(#motV)" stroke="#222" stroke-width="0.7" rx="2"/><rect x="1014.23" y="927.55" width="31.47" height="22.22" fill="url(#motV)" stroke="#111" stroke-width="0.9" rx="4"/><rect x="1015.71" y="929.04" width="21.16" height="0.7" fill="#555"/><rect x="1015.71" y="930.98" width="21.16" height="2.28" fill="#555"/><rect x="1015.71" y="934.49" width="21.16" height="0.7" fill="#555"/><rect x="1015.71" y="936.42" width="21.16" height="2.2" fill="#555"/><rect x="1025.97" y="941.96" width="9.91" height="9.88" fill="#c0c0c0" stroke="#111" stroke-width="1"/><rect x="1034.54" y="942.57" width="0.9" height="8.61" fill="#fff"/></g>
<g transform="translate(801,699.2)" stroke="#111" stroke-width="0.9"><rect x="-2.7" y="5.5" width="5.4" height="12" fill="url(#cylH2)"/><path d="M-11.800 2.200Q-11.800 0.400 -9 0.400H9Q11.900 0.400 11.900 2.200Q11.900 4 7 5.200L5.500 6.200H-5.500L-7 5.200Q-11.800 4 -11.800 2.200Z" fill="#dcdcdc"/><rect x="-8.300" y="1" width="16.600" height="2.200" fill="#ffffff" stroke="none"/><rect x="-11.2" y="15" width="22.5" height="17.3" fill="url(#cylV2)"/><rect x="-17.8" y="12" width="6.6" height="23.6" fill="url(#cylV2)"/><rect x="11.3" y="12" width="6.5" height="23.6" fill="url(#cylV2)"/></g>
<g transform="translate(801,811.7)" stroke="#111" stroke-width="0.9"><rect x="-2.7" y="5.5" width="5.4" height="12" fill="url(#cylH2)"/><path d="M-11.800 2.200Q-11.800 0.400 -9 0.400H9Q11.900 0.400 11.900 2.200Q11.900 4 7 5.200L5.500 6.200H-5.500L-7 5.200Q-11.800 4 -11.800 2.200Z" fill="#dcdcdc"/><rect x="-8.300" y="1" width="16.600" height="2.200" fill="#ffffff" stroke="none"/><rect x="-11.2" y="15" width="22.5" height="17.3" fill="url(#cylV2)"/><rect x="-17.8" y="12" width="6.6" height="23.6" fill="url(#cylV2)"/><rect x="11.3" y="12" width="6.5" height="23.6" fill="url(#cylV2)"/></g>
<g transform="translate(801,917.7)" stroke="#111" stroke-width="0.9"><rect x="-2.7" y="5.5" width="5.4" height="12" fill="url(#cylH2)"/><path d="M-11.800 2.200Q-11.800 0.400 -9 0.400H9Q11.900 0.400 11.900 2.200Q11.900 4 7 5.200L5.500 6.200H-5.500L-7 5.200Q-11.800 4 -11.800 2.200Z" fill="#dcdcdc"/><rect x="-8.300" y="1" width="16.600" height="2.200" fill="#ffffff" stroke="none"/><rect x="-11.2" y="15" width="22.5" height="17.3" fill="url(#cylV2)"/><rect x="-17.8" y="12" width="6.6" height="23.6" fill="url(#cylV2)"/><rect x="11.3" y="12" width="6.5" height="23.6" fill="url(#cylV2)"/></g>
<g transform="translate(1087,653)" stroke="#111" stroke-width="0.9"><rect x="-2.7" y="5.5" width="5.4" height="12" fill="url(#cylH2)"/><path d="M-11.800 2.200Q-11.800 0.400 -9 0.400H9Q11.900 0.400 11.900 2.200Q11.900 4 7 5.200L5.500 6.200H-5.500L-7 5.200Q-11.800 4 -11.800 2.200Z" fill="#dcdcdc"/><rect x="-8.300" y="1" width="16.600" height="2.200" fill="#ffffff" stroke="none"/><rect x="-11.2" y="15" width="22.5" height="17.3" fill="url(#cylV2)"/><rect x="-17.8" y="12" width="6.6" height="23.6" fill="url(#cylV2)"/><rect x="11.3" y="12" width="6.5" height="23.6" fill="url(#cylV2)"/></g>
<g transform="translate(1087,768)" stroke="#111" stroke-width="0.9"><rect x="-2.7" y="5.5" width="5.4" height="12" fill="url(#cylH2)"/><path d="M-11.800 2.200Q-11.800 0.400 -9 0.400H9Q11.900 0.400 11.900 2.200Q11.900 4 7 5.200L5.500 6.200H-5.500L-7 5.200Q-11.800 4 -11.800 2.200Z" fill="#dcdcdc"/><rect x="-8.300" y="1" width="16.600" height="2.200" fill="#ffffff" stroke="none"/><rect x="-11.2" y="15" width="22.5" height="17.3" fill="url(#cylV2)"/><rect x="-17.8" y="12" width="6.6" height="23.6" fill="url(#cylV2)"/><rect x="11.3" y="12" width="6.5" height="23.6" fill="url(#cylV2)"/></g>
<g transform="translate(1087,873.5)" stroke="#111" stroke-width="0.9"><rect x="-2.7" y="5.5" width="5.4" height="12" fill="url(#cylH2)"/><path d="M-11.800 2.200Q-11.800 0.400 -9 0.400H9Q11.900 0.400 11.900 2.200Q11.900 4 7 5.200L5.500 6.200H-5.500L-7 5.200Q-11.800 4 -11.800 2.200Z" fill="#dcdcdc"/><rect x="-8.300" y="1" width="16.600" height="2.200" fill="#ffffff" stroke="none"/><rect x="-11.2" y="15" width="22.5" height="17.3" fill="url(#cylV2)"/><rect x="-17.8" y="12" width="6.6" height="23.6" fill="url(#cylV2)"/><rect x="11.3" y="12" width="6.5" height="23.6" fill="url(#cylV2)"/></g>
<circle cx="1183.700" cy="730" r="18" fill="#808080" stroke="#4a4a4a" stroke-width="1"/>
<circle cx="1183.700" cy="844" r="18" fill="#00ff00" stroke="#1c5c1c" stroke-width="1"/>
</svg>
<div style="position:absolute;left:0;top:0;width:288px;height:148px;border:1px solid #555;background:linear-gradient(#e3e3e3 0%,#f6f6f6 50%,#e3e3e3 100%)"></div>
<div style="position:absolute;left:300px;top:0;width:1320px;height:149px;background:#f0f0f0;border-left:1px solid #6c6c58;border-right:1px solid #6c6c58;border-bottom:1px solid #6c6c58;box-sizing:border-box"></div>
<div style="position:absolute;left:301px;top:0;width:1318px;height:19px;background:#efebde;border-bottom:1px solid #7a7a66;box-sizing:border-box;border-top:1px solid #6c6c58"></div>
<div style="position:absolute;left:301px;top:19px;width:28px;height:90px;background:#f1ede1;border-right:1px solid #7a7a66"></div>
<div style="position:absolute;left:301px;top:20px;width:28px;height:18px;background:#ffc46c"></div>
<div style="position:absolute;left:301px;top:38px;width:1318px;height:1px;background:#a6a6a6"></div>
<div style="position:absolute;left:301px;top:38px;width:28px;height:1px;background:#7a7a66"></div>
<div style="position:absolute;left:301px;top:57px;width:1318px;height:1px;background:#a6a6a6"></div>
<div style="position:absolute;left:301px;top:57px;width:28px;height:1px;background:#7a7a66"></div>
<div style="position:absolute;left:301px;top:76px;width:1318px;height:1px;background:#a6a6a6"></div>
<div style="position:absolute;left:301px;top:76px;width:28px;height:1px;background:#7a7a66"></div>
<div style="position:absolute;left:301px;top:95px;width:1318px;height:1px;background:#a6a6a6"></div>
<div style="position:absolute;left:301px;top:95px;width:28px;height:1px;background:#7a7a66"></div>
<div style="position:absolute;left:329px;top:0;width:1px;height:109px;background:#8c8c80"></div>
<div style="position:absolute;left:527px;top:0;width:1px;height:109px;background:#8c8c80"></div>
<div style="position:absolute;left:725px;top:0;width:1px;height:109px;background:#8c8c80"></div>
<div class="ser" style="position:absolute;left:301px;top:19px;width:28px;text-align:center;font-size:18px;line-height:20px;color:#000">1</div>
<div class="ser" style="position:absolute;left:301px;top:38px;width:28px;text-align:center;font-size:18px;line-height:20px;color:#000">2</div>
<div class="ser" style="position:absolute;left:301px;top:57px;width:28px;text-align:center;font-size:18px;line-height:20px;color:#000">3</div>
<div class="ser" style="position:absolute;left:301px;top:76px;width:28px;text-align:center;font-size:18px;line-height:20px;color:#000">4</div>
<div class="ser" style="position:absolute;left:301px;top:95px;width:28px;height:14px;overflow:hidden;text-align:center;font-size:18px;line-height:20px;color:#000">5</div>
<div style="position:absolute;left:301px;top:109px;width:1318px;height:18px;background:#f0f0f0;border-top:1px solid #7a7a66;border-bottom:1px solid #7a7a66;box-sizing:border-box"></div>
<div style="position:absolute;left:318px;top:111px;width:982px;height:15px;background:#cdcdcd"></div>
<div style="position:absolute;left:1265px;top:130px;width:1px;height:17px;background:#d0d0d0"></div>
<div style="position:absolute;left:1329px;top:130px;width:1px;height:17px;background:#d0d0d0"></div>
<div style="position:absolute;left:1393px;top:130px;width:1px;height:17px;background:#d0d0d0"></div>
<div style="position:absolute;left:1445px;top:130px;width:1px;height:17px;background:#d0d0d0"></div>
<div style="position:absolute;left:1466px;top:130px;width:1px;height:17px;background:#d0d0d0"></div>
<div style="position:absolute;left:1493px;top:130px;width:1px;height:17px;background:#d0d0d0"></div>
<div style="position:absolute;left:1513px;top:130px;width:1px;height:17px;background:#d0d0d0"></div>
<div style="position:absolute;left:1534px;top:130px;width:1px;height:17px;background:#d0d0d0"></div>
<div style="position:absolute;left:1560px;top:130px;width:1px;height:17px;background:#d0d0d0"></div>
<div style="position:absolute;left:1630px;top:0;width:290px;height:149px;background:linear-gradient(#ff0000 0%,#ff0a0a 6%,#f9e6e6 45%,#f6f6f6 50%,#f9e6e6 55%,#ff0a0a 94%,#ff0000 100%);border:1px solid #c00000;box-sizing:border-box"></div>
<div class="san" style="position:absolute;left:1631px;top:48px;width:306px;text-align:center;font-size:23px;line-height:28px;color:#000">2025/2/24 22:33:21</div>
<div class="mono" style="position:absolute;left:1630px;top:85px;width:316px;text-align:center;font-size:26px;line-height:28px;color:#000;transform:scaleX(0.833)">WARING</div>
<div class="ser" style="position:absolute;left:170px;top:161px;width:62px;height:20.5px;background:#929292;border-top:1px solid #5a5a5a;border-left:1px solid #5a5a5a;border-right:1px solid #fff;border-bottom:1px solid #5a5a5a;box-sizing:border-box;text-align:center;font-size:19px;line-height:21.5px;color:#000;-webkit-text-stroke:0.4px #000;"><span style="display:inline-block;transform:scaleX(0.95)">V7</span></div>
<div style="position:absolute;left:170px;top:181px;width:62px;height:17px;box-sizing:border-box;border-right:1px solid #fff;border-bottom:1px solid #fff"></div>
<div class="ser" style="position:absolute;left:171px;top:182px;width:15px;height:14.8px;background:#e600e6;text-align:center;font-size:16px;line-height:15.8px;color:#000;font-weight:bold">A</div>
<div class="ser" style="position:absolute;left:294px;top:161px;width:62px;height:20.5px;background:#929292;border-top:1px solid #5a5a5a;border-left:1px solid #5a5a5a;border-right:1px solid #fff;border-bottom:1px solid #5a5a5a;box-sizing:border-box;text-align:center;font-size:19px;line-height:21.5px;color:#000;-webkit-text-stroke:0.4px #000;"><span style="display:inline-block;transform:scaleX(0.95)">V8</span></div>
<div style="position:absolute;left:294px;top:181px;width:62px;height:17px;box-sizing:border-box;border-right:1px solid #fff;border-bottom:1px solid #fff"></div>
<div class="ser" style="position:absolute;left:295px;top:182px;width:15px;height:14.8px;background:#e600e6;text-align:center;font-size:16px;line-height:15.8px;color:#000;font-weight:bold">A</div>
<div class="ser" style="position:absolute;left:82px;top:373.2px;width:62px;height:20.5px;background:#929292;border-top:1px solid #5a5a5a;border-left:1px solid #5a5a5a;border-right:1px solid #fff;border-bottom:1px solid #5a5a5a;box-sizing:border-box;text-align:center;font-size:19px;line-height:21.5px;color:#000;-webkit-text-stroke:0.4px #000;"><span style="display:inline-block;transform:scaleX(0.95)">V1</span></div>
<div style="position:absolute;left:82px;top:393.2px;width:62px;height:17px;box-sizing:border-box;border-right:1px solid #fff;border-bottom:1px solid #fff"></div>
<div class="ser" style="position:absolute;left:83px;top:394.2px;width:15px;height:14.8px;background:#e600e6;text-align:center;font-size:16px;line-height:15.8px;color:#000;font-weight:bold">A</div>
<div class="ser" style="position:absolute;left:366px;top:373.2px;width:62px;height:20.5px;background:#929292;border-top:1px solid #5a5a5a;border-left:1px solid #5a5a5a;border-right:1px solid #fff;border-bottom:1px solid #5a5a5a;box-sizing:border-box;text-align:center;font-size:19px;line-height:21.5px;color:#000;-webkit-text-stroke:0.4px #000;"><span style="display:inline-block;transform:scaleX(0.95)">V2</span></div>
<div style="position:absolute;left:366px;top:393.2px;width:62px;height:17px;box-sizing:border-box;border-right:1px solid #fff;border-bottom:1px solid #fff"></div>
<div class="ser" style="position:absolute;left:367px;top:394.2px;width:15px;height:14.8px;background:#e600e6;text-align:center;font-size:16px;line-height:15.8px;color:#000;font-weight:bold">A</div>
<div class="ser" style="position:absolute;left:826px;top:227px;width:62px;height:20.5px;background:#929292;border-top:1px solid #5a5a5a;border-left:1px solid #5a5a5a;border-right:1px solid #fff;border-bottom:1px solid #5a5a5a;box-sizing:border-box;text-align:center;font-size:19px;line-height:21.5px;color:#000;-webkit-text-stroke:0.4px #000;"><span style="display:inline-block;transform:scaleX(0.95)">V3</span></div>
<div style="position:absolute;left:826px;top:247px;width:62px;height:17px;box-sizing:border-box;border-right:1px solid #fff;border-bottom:1px solid #fff"></div>
<div class="ser" style="position:absolute;left:827px;top:248px;width:15px;height:14.8px;background:#e600e6;text-align:center;font-size:16px;line-height:15.8px;color:#000;font-weight:bold">A</div>
<div class="ser" style="position:absolute;left:1083px;top:254.2px;width:62px;height:20.5px;background:#929292;border-top:1px solid #5a5a5a;border-left:1px solid #5a5a5a;border-right:1px solid #fff;border-bottom:1px solid #5a5a5a;box-sizing:border-box;text-align:center;font-size:19px;line-height:21.5px;color:#000;-webkit-text-stroke:0.4px #000;"><span style="display:inline-block;transform:scaleX(0.95)">V6</span></div>
<div style="position:absolute;left:1083px;top:274.2px;width:62px;height:17px;box-sizing:border-box;border-right:1px solid #fff;border-bottom:1px solid #fff"></div>
<div class="ser" style="position:absolute;left:1084px;top:275.2px;width:15px;height:14.8px;background:#e600e6;text-align:center;font-size:16px;line-height:15.8px;color:#000;font-weight:bold">A</div>
<div class="ser" style="position:absolute;left:1544.4px;top:208.5px;width:62px;height:20.5px;background:#929292;border-top:1px solid #5a5a5a;border-left:1px solid #5a5a5a;border-right:1px solid #fff;border-bottom:1px solid #5a5a5a;box-sizing:border-box;text-align:center;font-size:19px;line-height:21.5px;color:#000;-webkit-text-stroke:0.4px #000;"><span style="display:inline-block;transform:scaleX(0.95)">V4</span></div>
<div style="position:absolute;left:1544.4px;top:228.5px;width:62px;height:17px;box-sizing:border-box;border-right:1px solid #fff;border-bottom:1px solid #fff"></div>
<div class="ser" style="position:absolute;left:1545.4px;top:229.5px;width:15px;height:14.8px;background:#e600e6;text-align:center;font-size:16px;line-height:15.8px;color:#000;font-weight:bold">A</div>
<div class="ser" style="position:absolute;left:1783.4px;top:210.4px;width:62px;height:20.5px;background:#929292;border-top:1px solid #5a5a5a;border-left:1px solid #5a5a5a;border-right:1px solid #fff;border-bottom:1px solid #5a5a5a;box-sizing:border-box;text-align:center;font-size:19px;line-height:21.5px;color:#000;-webkit-text-stroke:0.4px #000;"><span style="display:inline-block;transform:scaleX(0.95)">V5</span></div>
<div style="position:absolute;left:1783.4px;top:230.4px;width:62px;height:17px;box-sizing:border-box;border-right:1px solid #fff;border-bottom:1px solid #fff"></div>
<div class="ser" style="position:absolute;left:1784.4px;top:231.4px;width:15px;height:14.8px;background:#e600e6;text-align:center;font-size:16px;line-height:15.8px;color:#000;font-weight:bold">A</div>
<div class="ser" style="position:absolute;left:1308.3px;top:679.3px;width:62px;height:20.5px;background:#929292;border-top:1px solid #5a5a5a;border-left:1px solid #5a5a5a;border-right:1px solid #fff;border-bottom:1px solid #5a5a5a;box-sizing:border-box;text-align:center;font-size:19px;line-height:21.5px;color:#000;-webkit-text-stroke:0.4px #000;"><span style="display:inline-block;transform:scaleX(0.95)">V10</span></div>
<div style="position:absolute;left:1308.3px;top:699.3px;width:62px;height:17px;box-sizing:border-box;border-right:1px solid #fff;border-bottom:1px solid #fff"></div>
<div class="ser" style="position:absolute;left:1309.3px;top:700.3px;width:15px;height:14.8px;background:#e600e6;text-align:center;font-size:16px;line-height:15.8px;color:#000;font-weight:bold">A</div>
<div class="ser" style="position:absolute;left:1545px;top:679.3px;width:62px;height:20.5px;background:#929292;border-top:1px solid #5a5a5a;border-left:1px solid #5a5a5a;border-right:1px solid #fff;border-bottom:1px solid #5a5a5a;box-sizing:border-box;text-align:center;font-size:19px;line-height:21.5px;color:#000;-webkit-text-stroke:0.4px #000;"><span style="display:inline-block;transform:scaleX(0.95)">V9</span></div>
<div style="position:absolute;left:1545px;top:699.3px;width:62px;height:17px;box-sizing:border-box;border-right:1px solid #fff;border-bottom:1px solid #fff"></div>
<div class="ser" style="position:absolute;left:1546px;top:700.3px;width:15px;height:14.8px;background:#e600e6;text-align:center;font-size:16px;line-height:15.8px;color:#000;font-weight:bold">A</div>
<div class="ser" style="position:absolute;left:44px;top:524.7px;width:82px;height:28px;background:#929292;border-top:1px solid #5a5a5a;border-left:1px solid #5a5a5a;border-right:1px solid #fff;border-bottom:1px solid #5a5a5a;box-sizing:border-box;text-align:center;font-size:20px;line-height:29px;color:#000;font-weight:bold;"><span style="display:inline-block;transform:scaleX(0.8)">M3</span></div>
<div style="position:absolute;left:44px;top:552.2px;width:82px;height:23px;box-sizing:border-box;border-right:1px solid #fff;border-bottom:1px solid #fff;"></div>
<div class="ser" style="position:absolute;left:45px;top:553.2px;width:20px;height:21px;background:#e600e6;text-align:center;font-size:19px;line-height:22px;color:#000;font-weight:bold">A</div>
<div class="ser" style="position:absolute;left:384px;top:524.7px;width:82px;height:28px;background:#929292;border-top:1px solid #5a5a5a;border-left:1px solid #5a5a5a;border-right:1px solid #fff;border-bottom:1px solid #5a5a5a;box-sizing:border-box;text-align:center;font-size:20px;line-height:29px;color:#000;font-weight:bold;"><span style="display:inline-block;transform:scaleX(0.8)">M4</span></div>
<div style="position:absolute;left:384px;top:552.2px;width:82px;height:23px;box-sizing:border-box;border-right:1px solid #fff;border-bottom:1px solid #fff;"></div>
<div class="ser" style="position:absolute;left:385px;top:553.2px;width:20px;height:21px;background:#e600e6;text-align:center;font-size:19px;line-height:22px;color:#000;font-weight:bold">A</div>
<div class="ser" style="position:absolute;left:44px;top:683px;width:82px;height:28px;background:#929292;border-top:1px solid #5a5a5a;border-left:1px solid #5a5a5a;border-right:1px solid #fff;border-bottom:1px solid #5a5a5a;box-sizing:border-box;text-align:center;font-size:20px;line-height:29px;color:#000;font-weight:bold;"><span style="display:inline-block;transform:scaleX(0.8)">M1</span></div>
<div style="position:absolute;left:44px;top:710.5px;width:82px;height:23px;box-sizing:border-box;border-right:1px solid #fff;border-bottom:1px solid #fff;"></div>
<div class="ser" style="position:absolute;left:45px;top:711.5px;width:20px;height:21px;background:#e600e6;text-align:center;font-size:19px;line-height:22px;color:#000;font-weight:bold">A</div>
<div style="position:absolute;left:67.5px;top:711.5px;width:57.5px;height:21px;background:repeating-conic-gradient(#000 0 25%,#3c3c3c 0 50%) 0 0/2px 2px;"></div>
<div class="ser" style="position:absolute;left:384px;top:683px;width:82px;height:28px;background:#929292;border-top:1px solid #5a5a5a;border-left:1px solid #5a5a5a;border-right:1px solid #fff;border-bottom:1px solid #5a5a5a;box-sizing:border-box;text-align:center;font-size:20px;line-height:29px;color:#000;font-weight:bold;"><span style="display:inline-block;transform:scaleX(0.8)">M2</span></div>
<div style="position:absolute;left:384px;top:710.5px;width:82px;height:23px;box-sizing:border-box;border-right:1px solid #fff;border-bottom:1px solid #fff;"></div>
<div class="ser" style="position:absolute;left:385px;top:711.5px;width:20px;height:21px;background:#e600e6;text-align:center;font-size:19px;line-height:22px;color:#000;font-weight:bold">A</div>
<div style="position:absolute;left:407.5px;top:711.5px;width:57.5px;height:21px;background:repeating-conic-gradient(#000 0 25%,#3c3c3c 0 50%) 0 0/2px 2px;"></div>
<div class="ser" style="position:absolute;left:362px;top:851px;width:82px;height:28px;background:#929292;border-top:1px solid #5a5a5a;border-left:1px solid #5a5a5a;border-right:1px solid #fff;border-bottom:1px solid #5a5a5a;box-sizing:border-box;text-align:center;font-size:20px;line-height:29px;color:#000;font-weight:bold;"><span style="display:inline-block;transform:scaleX(0.8)">M5</span></div>
<div style="position:absolute;left:362px;top:878.5px;width:82px;height:23px;box-sizing:border-box;border-right:1px solid #fff;border-bottom:1px solid #fff;"></div>
<div class="ser" style="position:absolute;left:363px;top:879.5px;width:20px;height:21px;background:#e600e6;text-align:center;font-size:19px;line-height:22px;color:#000;font-weight:bold">A</div>
<div style="position:absolute;left:385.5px;top:879.5px;width:57.5px;height:21px;background:repeating-conic-gradient(#000 0 25%,#3c3c3c 0 50%) 0 0/2px 2px;"></div>
<div class="ser" style="position:absolute;left:594px;top:444.4px;width:82px;height:28px;background:#929292;border-top:1px solid #5a5a5a;border-left:1px solid #5a5a5a;border-right:1px solid #fff;border-bottom:1px solid #5a5a5a;box-sizing:border-box;text-align:center;font-size:20px;line-height:29px;color:#000;-webkit-text-stroke:0.4px #000;"><span style="display:inline-block;transform:scaleX(0.9)">VP1</span></div>
<div style="position:absolute;left:594px;top:471.9px;width:82px;height:22px;box-sizing:border-box;border-right:1px solid #fff;border-bottom:1px solid #fff;"></div>
<div class="ser" style="position:absolute;left:595px;top:472.9px;width:20px;height:20px;background:#e600e6;text-align:center;font-size:19px;line-height:21px;color:#000;font-weight:bold">A</div>
<div style="position:absolute;left:617.5px;top:472.9px;width:57.5px;height:20px;background:repeating-conic-gradient(#000 0 25%,#3c3c3c 0 50%) 0 0/2px 2px;"></div>
<div class="ser" style="position:absolute;left:1174.3px;top:610.2px;width:82px;height:28px;background:#929292;border-top:1px solid #5a5a5a;border-left:1px solid #5a5a5a;border-right:1px solid #fff;border-bottom:1px solid #5a5a5a;box-sizing:border-box;text-align:center;font-size:20px;line-height:29px;color:#000;font-weight:bold;"><span style="display:inline-block;transform:scaleX(0.8)">M6</span></div>
<div style="position:absolute;left:1174.3px;top:637.7px;width:82px;height:23px;box-sizing:border-box;border-right:1px solid #fff;border-bottom:1px solid #fff;"></div>
<div class="ser" style="position:absolute;left:1175.3px;top:638.7px;width:20px;height:21px;background:#e600e6;text-align:center;font-size:19px;line-height:22px;color:#000;font-weight:bold">A</div>
<div style="position:absolute;left:1197.8px;top:638.7px;width:57.5px;height:21px;background:repeating-conic-gradient(#000 0 25%,#3c3c3c 0 50%) 0 0/2px 2px;"></div>
<div class="ser" style="position:absolute;left:826.5px;top:746.5px;width:82px;height:28px;background:#929292;border-top:1px solid #5a5a5a;border-left:1px solid #5a5a5a;border-right:1px solid #fff;border-bottom:1px solid #5a5a5a;box-sizing:border-box;text-align:center;font-size:20px;line-height:29px;color:#000;font-weight:bold;"><span style="display:inline-block;transform:scaleX(0.8)">M13</span></div>
<div style="position:absolute;left:826.5px;top:774px;width:82px;height:23px;box-sizing:border-box;border-right:1px solid #fff;border-bottom:1px solid #fff;"></div>
<div class="ser" style="position:absolute;left:827.5px;top:775px;width:20px;height:21px;background:#e600e6;text-align:center;font-size:19px;line-height:22px;color:#000;font-weight:bold">A</div>
<div class="ser" style="position:absolute;left:826.5px;top:858px;width:82px;height:28px;background:#929292;border-top:1px solid #5a5a5a;border-left:1px solid #5a5a5a;border-right:1px solid #fff;border-bottom:1px solid #5a5a5a;box-sizing:border-box;text-align:center;font-size:20px;line-height:29px;color:#000;font-weight:bold;"><span style="display:inline-block;transform:scaleX(0.8)">M12</span></div>
<div style="position:absolute;left:826.5px;top:885.5px;width:82px;height:23px;box-sizing:border-box;border-right:1px solid #fff;border-bottom:1px solid #fff;"></div>
<div class="ser" style="position:absolute;left:827.5px;top:886.5px;width:20px;height:21px;background:#e600e6;text-align:center;font-size:19px;line-height:22px;color:#000;font-weight:bold">A</div>
<div class="ser" style="position:absolute;left:826.5px;top:964.5px;width:82px;height:28px;background:#929292;border-top:1px solid #5a5a5a;border-left:1px solid #5a5a5a;border-right:1px solid #fff;border-bottom:1px solid #5a5a5a;box-sizing:border-box;text-align:center;font-size:20px;line-height:29px;color:#000;font-weight:bold;"><span style="display:inline-block;transform:scaleX(0.8)">M11</span></div>
<div style="position:absolute;left:826.5px;top:992px;width:82px;height:23px;box-sizing:border-box;border-right:1px solid #fff;border-bottom:1px solid #fff;"></div>
<div class="ser" style="position:absolute;left:827.5px;top:993px;width:20px;height:21px;background:#e600e6;text-align:center;font-size:19px;line-height:22px;color:#000;font-weight:bold">A</div>
<div class="ser" style="position:absolute;left:1444px;top:240.5px;width:82px;height:28px;background:#929292;border-top:1px solid #5a5a5a;border-left:1px solid #5a5a5a;border-right:1px solid #fff;border-bottom:1px solid #5a5a5a;box-sizing:border-box;text-align:center;font-size:20px;line-height:29px;color:#000;font-weight:bold;"><span style="display:inline-block;transform:scaleX(0.8)">M7</span></div>
<div style="position:absolute;left:1444px;top:268px;width:82px;height:23px;box-sizing:border-box;border-right:1px solid #fff;border-bottom:1px solid #fff;"></div>
<div class="ser" style="position:absolute;left:1445px;top:269px;width:20px;height:21px;background:#e600e6;text-align:center;font-size:19px;line-height:22px;color:#000;font-weight:bold">A</div>
<div style="position:absolute;left:1467.5px;top:269px;width:57.5px;height:21px;background:repeating-conic-gradient(#000 0 25%,#3c3c3c 0 50%) 0 0/2px 2px;"></div>
<div class="ser" style="position:absolute;left:1681.2px;top:240.5px;width:82px;height:28px;background:#929292;border-top:1px solid #5a5a5a;border-left:1px solid #5a5a5a;border-right:1px solid #fff;border-bottom:1px solid #5a5a5a;box-sizing:border-box;text-align:center;font-size:20px;line-height:29px;color:#000;font-weight:bold;"><span style="display:inline-block;transform:scaleX(0.8)">M8</span></div>
<div style="position:absolute;left:1681.2px;top:268px;width:82px;height:23px;box-sizing:border-box;border-right:1px solid #fff;border-bottom:1px solid #fff;"></div>
<div class="ser" style="position:absolute;left:1682.2px;top:269px;width:20px;height:21px;background:#e600e6;text-align:center;font-size:19px;line-height:22px;color:#000;font-weight:bold">A</div>
<div style="position:absolute;left:1704.7px;top:269px;width:57.5px;height:21px;background:repeating-conic-gradient(#000 0 25%,#3c3c3c 0 50%) 0 0/2px 2px;"></div>
<div class="ser" style="position:absolute;left:1393.3px;top:384px;width:82px;height:28px;background:#929292;border-top:1px solid #5a5a5a;border-left:1px solid #5a5a5a;border-right:1px solid #fff;border-bottom:1px solid #5a5a5a;box-sizing:border-box;text-align:center;font-size:20px;line-height:29px;color:#000;font-weight:bold;"><span style="display:inline-block;transform:scaleX(0.8)">M9</span></div>
<div style="position:absolute;left:1393.3px;top:411.5px;width:82px;height:23px;box-sizing:border-box;border-right:1px solid #fff;border-bottom:1px solid #fff;"></div>
<div class="ser" style="position:absolute;left:1394.3px;top:412.5px;width:20px;height:21px;background:#e600e6;text-align:center;font-size:19px;line-height:22px;color:#000;font-weight:bold">A</div>
<div style="position:absolute;left:1416.8px;top:412.5px;width:57.5px;height:21px;background:repeating-conic-gradient(#000 0 25%,#3c3c3c 0 50%) 0 0/2px 2px;"></div>
<div class="ser" style="position:absolute;left:1630.7px;top:384px;width:82px;height:28px;background:#929292;border-top:1px solid #5a5a5a;border-left:1px solid #5a5a5a;border-right:1px solid #fff;border-bottom:1px solid #5a5a5a;box-sizing:border-box;text-align:center;font-size:20px;line-height:29px;color:#000;font-weight:bold;"><span style="display:inline-block;transform:scaleX(0.8)">M10</span></div>
<div style="position:absolute;left:1630.7px;top:411.5px;width:82px;height:23px;box-sizing:border-box;border-right:1px solid #fff;border-bottom:1px solid #fff;"></div>
<div class="ser" style="position:absolute;left:1631.7px;top:412.5px;width:20px;height:21px;background:#e600e6;text-align:center;font-size:19px;line-height:22px;color:#000;font-weight:bold">A</div>
<div style="position:absolute;left:1654.2px;top:412.5px;width:57.5px;height:21px;background:repeating-conic-gradient(#000 0 25%,#3c3c3c 0 50%) 0 0/2px 2px;"></div>
<div class="ser" style="position:absolute;left:1821.3px;top:606.5px;width:82px;height:28px;background:#929292;border-top:1px solid #5a5a5a;border-left:1px solid #5a5a5a;border-right:1px solid #fff;border-bottom:1px solid #5a5a5a;box-sizing:border-box;text-align:center;font-size:20px;line-height:29px;color:#000;font-weight:bold;"><span style="display:inline-block;transform:scaleX(0.8)">M14</span></div>
<div style="position:absolute;left:1821.3px;top:634px;width:82px;height:23px;box-sizing:border-box;border-right:1px solid #fff;border-bottom:1px solid #fff;border-left:1px solid #fff"></div>
<div class="ser" style="position:absolute;left:1833.3px;top:962px;width:82px;height:28px;background:#929292;border-top:1px solid #5a5a5a;border-left:1px solid #5a5a5a;border-right:1px solid #fff;border-bottom:1px solid #5a5a5a;box-sizing:border-box;text-align:center;font-size:20px;line-height:29px;color:#000;font-weight:bold;"><span style="display:inline-block;transform:scaleX(0.8)">M15</span></div>
<div style="position:absolute;left:1833.3px;top:989.5px;width:82px;height:23px;box-sizing:border-box;border-right:1px solid #fff;border-bottom:1px solid #fff;"></div>
<div class="ser" style="position:absolute;left:1834.3px;top:990.5px;width:20px;height:21px;background:#e600e6;text-align:center;font-size:19px;line-height:22px;color:#000;font-weight:bold">A</div>
<div class="ser" style="position:absolute;left:52px;top:208px;width:60px;height:24.5px;background:#929292;border-top:1px solid #5a5a5a;border-left:1px solid #5a5a5a;border-right:1px solid #fff;border-bottom:1px solid #5a5a5a;box-sizing:border-box;text-align:center;font-size:20px;line-height:25.5px;color:#000;-webkit-text-stroke:0.4px #000;">LT1</div>
<div class="ser" style="position:absolute;left:52px;top:232.5px;width:60px;height:26.5px;background:#929292;border-right:1px solid #fff;border-bottom:1px solid #fff;box-sizing:border-box;text-align:right;font-size:21px;line-height:30.5px;color:#000;padding-right:0.5px"><span style="display:inline-block;transform:scaleX(0.62);transform-origin:100% 50%;-webkit-text-stroke:0.4px #000">%</span></div>
<div style="position:absolute;left:52px;top:235px;width:48px;height:24px;background:repeating-conic-gradient(#000 0 25%,#3c3c3c 0 50%) 0 0/2px 2px;"></div>
<div class="ser" style="position:absolute;left:298px;top:730px;width:60px;height:24.5px;background:#929292;border-top:1px solid #5a5a5a;border-left:1px solid #5a5a5a;border-right:1px solid #fff;border-bottom:1px solid #5a5a5a;box-sizing:border-box;text-align:center;font-size:20px;line-height:25.5px;color:#000;-webkit-text-stroke:0.4px #000;">LT2</div>
<div class="ser" style="position:absolute;left:298px;top:754.5px;width:60px;height:26.5px;background:#929292;border-right:1px solid #fff;border-bottom:1px solid #fff;box-sizing:border-box;text-align:right;font-size:21px;line-height:30.5px;color:#000;padding-right:0.5px"><span style="display:inline-block;transform:scaleX(0.62);transform-origin:100% 50%;-webkit-text-stroke:0.4px #000">%</span></div>
<div style="position:absolute;left:298px;top:757px;width:48px;height:24px;background:repeating-conic-gradient(#000 0 25%,#3c3c3c 0 50%) 0 0/2px 2px;"></div>
<div class="ser" style="position:absolute;left:1207px;top:314px;width:60px;height:24.5px;background:#929292;border-top:1px solid #5a5a5a;border-left:1px solid #5a5a5a;border-right:1px solid #fff;border-bottom:1px solid #5a5a5a;box-sizing:border-box;text-align:center;font-size:20px;line-height:25.5px;color:#000;-webkit-text-stroke:0.4px #000;">LT3</div>
<div class="ser" style="position:absolute;left:1207px;top:338.5px;width:60px;height:26.5px;background:#929292;border-right:1px solid #fff;border-bottom:1px solid #fff;box-sizing:border-box;text-align:right;font-size:21px;line-height:30.5px;color:#000;padding-right:0.5px"><span style="display:inline-block;transform:scaleX(0.62);transform-origin:100% 50%;-webkit-text-stroke:0.4px #000">%</span></div>
<div style="position:absolute;left:1207px;top:341px;width:48px;height:24px;background:repeating-conic-gradient(#000 0 25%,#3c3c3c 0 50%) 0 0/2px 2px;"></div>
<div class="ser" style="position:absolute;left:1835.3px;top:691px;width:60px;height:24.5px;background:#929292;border-top:1px solid #5a5a5a;border-left:1px solid #5a5a5a;border-right:1px solid #fff;border-bottom:1px solid #5a5a5a;box-sizing:border-box;text-align:center;font-size:20px;line-height:25.5px;color:#000;-webkit-text-stroke:0.4px #000;">LT4</div>
<div class="ser" style="position:absolute;left:1835.3px;top:715.5px;width:60px;height:26.5px;background:#929292;border-right:1px solid #fff;border-bottom:1px solid #fff;box-sizing:border-box;text-align:right;font-size:21px;line-height:30.5px;color:#000;padding-right:0.5px"><span style="display:inline-block;transform:scaleX(0.62);transform-origin:100% 50%;-webkit-text-stroke:0.4px #000">%</span></div>
<div style="position:absolute;left:1835.3px;top:718px;width:48px;height:24px;background:repeating-conic-gradient(#000 0 25%,#3c3c3c 0 50%) 0 0/2px 2px;"></div>
<div class="ser" style="position:absolute;left:964px;top:316.6px;width:60px;height:24.5px;background:#929292;border-top:1px solid #5a5a5a;border-left:1px solid #5a5a5a;border-right:1px solid #fff;border-bottom:1px solid #5a5a5a;box-sizing:border-box;text-align:center;font-size:20px;line-height:25.5px;color:#000;-webkit-text-stroke:0.4px #000;">TT2</div>
<div class="ser" style="position:absolute;left:964px;top:341.1px;width:60px;height:25.5px;background:#929292;border-right:1px solid #fff;border-bottom:1px solid #fff;box-sizing:border-box;text-align:right;font-size:21px;line-height:29.5px;color:#000;padding-right:1px"><span style="display:inline-block;transform:scaleX(0.92);transform-origin:100% 50%;-webkit-text-stroke:0.4px #000">C</span></div>
<div style="position:absolute;left:964px;top:343.6px;width:48px;height:23px;background:repeating-conic-gradient(#000 0 25%,#3c3c3c 0 50%) 0 0/2px 2px;"></div>
<div class="ser" style="position:absolute;left:734px;top:546.9px;width:60px;height:24.5px;background:#929292;border-top:1px solid #5a5a5a;border-left:1px solid #5a5a5a;border-right:1px solid #fff;border-bottom:1px solid #5a5a5a;box-sizing:border-box;text-align:center;font-size:20px;line-height:25.5px;color:#000;-webkit-text-stroke:0.4px #000;">TT1</div>
<div class="ser" style="position:absolute;left:734px;top:571.4px;width:60px;height:25.5px;background:#929292;border-right:1px solid #fff;border-bottom:1px solid #fff;box-sizing:border-box;text-align:right;font-size:21px;line-height:29.5px;color:#000;padding-right:1px"><span style="display:inline-block;transform:scaleX(0.92);transform-origin:100% 50%;-webkit-text-stroke:0.4px #000">C</span></div>
<div style="position:absolute;left:734px;top:573.9px;width:48px;height:23px;background:repeating-conic-gradient(#000 0 25%,#3c3c3c 0 50%) 0 0/2px 2px;"></div>
<div class="ser" style="position:absolute;left:530px;top:360px;width:69px;height:24px;background:#929292;border-top:1px solid #5a5a5a;border-left:1px solid #5a5a5a;border-right:1px solid #fff;border-bottom:1px solid #5a5a5a;box-sizing:border-box;text-align:center;font-size:20px;line-height:25px;color:#000;-webkit-text-stroke:0.4px #000;">PT1</div>
<div class="ser" style="position:absolute;left:530px;top:384px;width:69px;height:23.6px;background:#929292;border-right:1px solid #fff;border-bottom:1px solid #fff;box-sizing:border-box;text-align:right;font-size:21px;line-height:27.6px;color:#000;padding-right:1px"></div>
<div style="position:absolute;left:530px;top:386.5px;width:46px;height:21.1px;background:repeating-conic-gradient(#000 0 25%,#3c3c3c 0 50%) 0 0/2px 2px;"></div>
<div class="ser" style="position:absolute;left:576px;top:389px;width:24px;font-size:11px;line-height:12px;font-weight:bold;color:#000;letter-spacing:0.5px">Mpa</div>
<div style="position:absolute;left:0;top:1020px;width:1920px;height:60px;background:#dcdcdc"></div>
<div style="position:absolute;box-sizing:border-box;border:2px solid #008282;left:4px;top:1022px;width:385px;height:56.5px"></div>
<div style="position:absolute;box-sizing:border-box;border:2px solid #008282;left:401px;top:1022px;width:1190px;height:56.5px"></div>
<div style="position:absolute;box-sizing:border-box;border:2px solid #008282;left:1600px;top:1022px;width:314.5px;height:56.5px"></div>
<div style="position:absolute;left:10.5px;top:1026px;width:120px;height:49px;box-sizing:border-box;border:1px solid #c4c4c4;border-radius:3px;background:linear-gradient(#ebebeb,#e4e4e4 50%,#dedede)"></div>
<div style="position:absolute;left:136.5px;top:1026px;width:120px;height:49px;box-sizing:border-box;border:1px solid #c4c4c4;border-radius:3px;background:linear-gradient(#ebebeb,#e4e4e4 50%,#dedede)"></div>
<div style="position:absolute;left:262.5px;top:1026px;width:120px;height:49px;box-sizing:border-box;border:1px solid #c4c4c4;border-radius:3px;background:linear-gradient(#ebebeb,#e4e4e4 50%,#dedede)"></div>
<div style="position:absolute;left:448.6px;top:1026px;width:121px;height:49px;box-sizing:border-box;border:1px solid #50505c;border-radius:3px;background:linear-gradient(#8c8c9c 0%,#6c6c7c 42%,#5e606e 52%,#5a5c6a 100%)"></div>
<div style="position:absolute;left:616.8px;top:1026px;width:121px;height:49px;box-sizing:border-box;border:1px solid #50505c;border-radius:3px;background:linear-gradient(#8c8c9c 0%,#6c6c7c 42%,#5e606e 52%,#5a5c6a 100%)"></div>
<div style="position:absolute;left:785.2px;top:1026px;width:121px;height:49px;box-sizing:border-box;border:1px solid #50505c;border-radius:3px;background:linear-gradient(#8c8c9c 0%,#6c6c7c 42%,#5e606e 52%,#5a5c6a 100%)"></div>
<div style="position:absolute;left:953px;top:1026px;width:121px;height:49px;box-sizing:border-box;border:1px solid #50505c;border-radius:3px;background:linear-gradient(#8c8c9c 0%,#6c6c7c 42%,#5e606e 52%,#5a5c6a 100%)"></div>
<div style="position:absolute;left:1120.6px;top:1026px;width:121px;height:49px;box-sizing:border-box;border:1px solid #50505c;border-radius:3px;background:linear-gradient(#8c8c9c 0%,#6c6c7c 42%,#5e606e 52%,#5a5c6a 100%)"></div>
<div style="position:absolute;left:1288.6px;top:1026px;width:121px;height:49px;box-sizing:border-box;border:1px solid #50505c;border-radius:3px;background:linear-gradient(#8c8c9c 0%,#6c6c7c 42%,#5e606e 52%,#5a5c6a 100%)"></div>
<div style="position:absolute;left:1457.8px;top:1026px;width:121px;height:49px;box-sizing:border-box;border:1px solid #50505c;border-radius:3px;background:linear-gradient(#8c8c9c 0%,#6c6c7c 42%,#5e606e 52%,#5a5c6a 100%)"></div>
<svg id="top" width="1920" height="1080" viewBox="0 0 1920 1080">
<text x="72" y="83.9" font-family="'Liberation Serif','Noto Serif CJK SC',serif" font-size="22" font-weight="bold" letter-spacing="3" fill="#000">设备当前状态</text>
<text x="334" y="16" font-family="'Liberation Serif','Noto Serif CJK SC',serif" font-size="17" letter-spacing="0.5" fill="#222">日期</text>
<text x="531" y="16" font-family="'Liberation Serif','Noto Serif CJK SC',serif" font-size="17" letter-spacing="0.5" fill="#222">时间</text>
<text x="730" y="16" font-family="'Liberation Serif','Noto Serif CJK SC',serif" font-size="17" letter-spacing="0.5" fill="#222">消息文本</text>
<g role="img" fill="#ff0000"><title>2025/02/24</title><text x="337.45" y="35.05" font-family="Liberation Serif" font-size="17.8" text-anchor="middle" stroke="none">2</text><text x="346.35" y="35.05" font-family="Liberation Serif" font-size="17.8" text-anchor="middle" stroke="none">0</text><text x="355.25" y="35.05" font-family="Liberation Serif" font-size="17.8" text-anchor="middle" stroke="none">2</text><text x="364.15" y="35.05" font-family="Liberation Serif" font-size="17.8" text-anchor="middle" stroke="none">5</text><text x="373.05" y="35.05" font-family="Liberation Serif" font-size="17.8" text-anchor="middle" stroke="none">/</text><text x="381.95" y="35.05" font-family="Liberation Serif" font-size="17.8" text-anchor="middle" stroke="none">0</text><text x="390.85" y="35.05" font-family="Liberation Serif" font-size="17.8" text-anchor="middle" stroke="none">2</text><text x="399.75" y="35.05" font-family="Liberation Serif" font-size="17.8" text-anchor="middle" stroke="none">/</text><text x="408.65" y="35.05" font-family="Liberation Serif" font-size="17.8" text-anchor="middle" stroke="none">2</text><text x="417.55" y="35.05" font-family="Liberation Serif" font-size="17.8" text-anchor="middle" stroke="none">4</text></g>
<g role="img" fill="#ff0000"><title>22:33:14</title><text x="535.45" y="35.05" font-family="Liberation Serif" font-size="17.8" text-anchor="middle" stroke="none">2</text><text x="544.35" y="35.05" font-family="Liberation Serif" font-size="17.8" text-anchor="middle" stroke="none">2</text><text x="553.25" y="35.05" font-family="Liberation Serif" font-size="17.8" text-anchor="middle" stroke="none">:</text><text x="562.15" y="35.05" font-family="Liberation Serif" font-size="17.8" text-anchor="middle" stroke="none">3</text><text x="571.05" y="35.05" font-family="Liberation Serif" font-size="17.8" text-anchor="middle" stroke="none">3</text><text x="579.95" y="35.05" font-family="Liberation Serif" font-size="17.8" text-anchor="middle" stroke="none">:</text><text x="588.85" y="35.05" font-family="Liberation Serif" font-size="17.8" text-anchor="middle" stroke="none">1</text><text x="597.75" y="35.05" font-family="Liberation Serif" font-size="17.8" text-anchor="middle" stroke="none">4</text></g>
<text y="35.2" font-family="'Liberation Serif','Noto Serif CJK SC',serif" font-size="16.8" fill="#ff0000"><tspan x="730">前处理</tspan><tspan x="780.3">PLC</tspan><tspan x="807.6">通讯异常</tspan></text>
<path d="M312 114.5l-4.5 4 4.5 4" fill="none" stroke="#505050" stroke-width="1.6"/>
<path d="M1607.5 114.5l4.5 4-4.5 4" fill="none" stroke="#505050" stroke-width="1.6"/>
<text x="303" y="142.8" font-family="'Liberation Sans','Noto Sans CJK SC',sans-serif" font-size="12" fill="#000">就绪</text>
<text y="142.8" font-family="'Liberation Mono','Noto Sans CJK SC',monospace" font-size="12" fill="#000"><tspan x="1205">待处理</tspan><tspan x="1240.4">:</tspan><tspan x="1252.4">1</tspan></text>
<text y="142.8" font-family="'Liberation Mono','Noto Sans CJK SC',monospace" font-size="12" fill="#000"><tspan x="1269">待确认</tspan><tspan x="1304.4">:</tspan><tspan x="1316.4">1</tspan></text>
<text y="142.8" font-family="'Liberation Mono','Noto Sans CJK SC',monospace" font-size="12" fill="#000"><tspan x="1333">已隐藏</tspan><tspan x="1368.4">:</tspan><tspan x="1380.4">0</tspan></text>
<text y="142.8" font-family="'Liberation Mono','Noto Sans CJK SC',monospace" font-size="12" fill="#000"><tspan x="1397">列表</tspan><tspan x="1420.4">:</tspan><tspan x="1432.4">1</tspan></text>
<g role="img" fill="#000"><title>22:33:20</title><text x="1566" y="142.58" font-family="Liberation Mono" font-size="12" text-anchor="middle" stroke="none">2</text><text x="1572" y="142.58" font-family="Liberation Mono" font-size="12" text-anchor="middle" stroke="none">2</text><text x="1578" y="142.58" font-family="Liberation Mono" font-size="12" text-anchor="middle" stroke="none">:</text><text x="1584" y="142.58" font-family="Liberation Mono" font-size="12" text-anchor="middle" stroke="none">3</text><text x="1590" y="142.58" font-family="Liberation Mono" font-size="12" text-anchor="middle" stroke="none">3</text><text x="1596" y="142.58" font-family="Liberation Mono" font-size="12" text-anchor="middle" stroke="none">:</text><text x="1602" y="142.58" font-family="Liberation Mono" font-size="12" text-anchor="middle" stroke="none">2</text><text x="1608" y="142.58" font-family="Liberation Mono" font-size="12" text-anchor="middle" stroke="none">0</text></g>
<g><rect x="1472.5" y="130.5" width="15" height="15" fill="#dfe8f4" stroke="#6f8fb8"/><circle cx="1480" cy="136.5" r="4.2" fill="#fff" stroke="#444" stroke-width="1"/><rect x="1478" y="140.5" width="4" height="3.5" fill="#666"/></g>
<g><rect x="1540.5" y="134.5" width="8" height="7" fill="#d8d8d8" stroke="#444"/><rect x="1542" y="136" width="5" height="3" fill="#1a9a2a"/><rect x="1545.5" y="130.5" width="8" height="7" fill="#d8d8d8" stroke="#444"/><rect x="1547" y="132" width="5" height="3" fill="#1a9a2a"/><rect x="1541" y="142.5" width="8" height="2" fill="#888"/></g>
<text x="97.25" y="729.2" font-family="Liberation Sans" font-size="20" fill="#00ff00" stroke="#00ff00" stroke-width="0.5" letter-spacing="2" text-anchor="middle">0.0</text>
<g opacity="0.72"><path d="M96.25 715.35L104.75 730.65L87.75 730.65Z" fill="#c8a040" stroke="#a87828" stroke-width="1" stroke-linejoin="round"/><rect x="95.45" y="720.25" width="1.6" height="6.12" fill="#222"/><rect x="95.45" y="727.59" width="1.6" height="1.6" fill="#222"/></g>
<text x="437.25" y="729.2" font-family="Liberation Sans" font-size="20" fill="#00ff00" stroke="#00ff00" stroke-width="0.5" letter-spacing="2" text-anchor="middle">0.0</text>
<g opacity="0.72"><path d="M436.25 715.35L444.75 730.65L427.75 730.65Z" fill="#c8a040" stroke="#a87828" stroke-width="1" stroke-linejoin="round"/><rect x="435.45" y="720.25" width="1.6" height="6.12" fill="#222"/><rect x="435.45" y="727.59" width="1.6" height="1.6" fill="#222"/></g>
<text x="415.25" y="897.2" font-family="Liberation Sans" font-size="20" fill="#00ff00" stroke="#00ff00" stroke-width="0.5" letter-spacing="2" text-anchor="middle">0.0</text>
<g opacity="0.72"><path d="M414.25 883.35L422.75 898.65L405.75 898.65Z" fill="#c8a040" stroke="#a87828" stroke-width="1" stroke-linejoin="round"/><rect x="413.45" y="888.25" width="1.6" height="6.12" fill="#222"/><rect x="413.45" y="895.59" width="1.6" height="1.6" fill="#222"/></g>
<text x="647.25" y="490.1" font-family="Liberation Sans" font-size="20" fill="#00ff00" stroke="#00ff00" stroke-width="0.5" letter-spacing="2" text-anchor="middle">0.0</text>
<g opacity="0.72"><path d="M646.25 476.25L654.75 491.55L637.75 491.55Z" fill="#c8a040" stroke="#a87828" stroke-width="1" stroke-linejoin="round"/><rect x="645.45" y="481.15" width="1.6" height="6.12" fill="#222"/><rect x="645.45" y="488.49" width="1.6" height="1.6" fill="#222"/></g>
<text x="1227.55" y="656.4" font-family="Liberation Sans" font-size="20" fill="#00ff00" stroke="#00ff00" stroke-width="0.5" letter-spacing="2" text-anchor="middle">0.0</text>
<g opacity="0.72"><path d="M1226.55 642.55L1235.05 657.85L1218.05 657.85Z" fill="#c8a040" stroke="#a87828" stroke-width="1" stroke-linejoin="round"/><rect x="1225.75" y="647.45" width="1.6" height="6.12" fill="#222"/><rect x="1225.75" y="654.79" width="1.6" height="1.6" fill="#222"/></g>
<g opacity="0.9"><path d="M1496.25 274.3L1504.25 288.7L1488.25 288.7Z" fill="#c8a040" stroke="#a87828" stroke-width="1" stroke-linejoin="round"/><rect x="1495.45" y="278.91" width="1.6" height="5.76" fill="#222"/><rect x="1495.45" y="285.82" width="1.6" height="1.6" fill="#222"/></g>
<text x="1496.75" y="287.2" font-family="Liberation Sans" font-size="20" fill="#00ff00" stroke="#00ff00" stroke-width="0.5" letter-spacing="2" text-anchor="middle">0</text>
<g opacity="0.9"><path d="M1733.45 274.3L1741.45 288.7L1725.45 288.7Z" fill="#c8a040" stroke="#a87828" stroke-width="1" stroke-linejoin="round"/><rect x="1732.65" y="278.91" width="1.6" height="5.76" fill="#222"/><rect x="1732.65" y="285.82" width="1.6" height="1.6" fill="#222"/></g>
<text x="1733.95" y="287.2" font-family="Liberation Sans" font-size="20" fill="#00ff00" stroke="#00ff00" stroke-width="0.5" letter-spacing="2" text-anchor="middle">0</text>
<g opacity="0.9"><path d="M1445.55 417.8L1453.55 432.2L1437.55 432.2Z" fill="#c8a040" stroke="#a87828" stroke-width="1" stroke-linejoin="round"/><rect x="1444.75" y="422.41" width="1.6" height="5.76" fill="#222"/><rect x="1444.75" y="429.32" width="1.6" height="1.6" fill="#222"/></g>
<text x="1446.05" y="430.7" font-family="Liberation Sans" font-size="20" fill="#00ff00" stroke="#00ff00" stroke-width="0.5" letter-spacing="2" text-anchor="middle">0</text>
<g opacity="0.9"><path d="M1682.95 417.8L1690.95 432.2L1674.95 432.2Z" fill="#c8a040" stroke="#a87828" stroke-width="1" stroke-linejoin="round"/><rect x="1682.15" y="422.41" width="1.6" height="5.76" fill="#222"/><rect x="1682.15" y="429.32" width="1.6" height="1.6" fill="#222"/></g>
<text x="1683.45" y="430.7" font-family="Liberation Sans" font-size="20" fill="#00ff00" stroke="#00ff00" stroke-width="0.5" letter-spacing="2" text-anchor="middle">0</text>
<g opacity="0.9"><path d="M76 239.95L85.5 257.05L66.5 257.05Z" fill="#c8a040" stroke="#a87828" stroke-width="1" stroke-linejoin="round"/><rect x="75.2" y="245.42" width="1.6" height="6.84" fill="#222"/><rect x="75.2" y="253.63" width="1.6" height="1.6" fill="#222"/></g>
<text x="76.5" y="255.06" font-family="Liberation Sans" font-size="21" fill="#00ff00" stroke="#00ff00" stroke-width="0.5" letter-spacing="2" text-anchor="middle">0</text>
<g opacity="0.9"><path d="M322 761.95L331.5 779.05L312.5 779.05Z" fill="#c8a040" stroke="#a87828" stroke-width="1" stroke-linejoin="round"/><rect x="321.2" y="767.42" width="1.6" height="6.84" fill="#222"/><rect x="321.2" y="775.63" width="1.6" height="1.6" fill="#222"/></g>
<text x="322.5" y="777.06" font-family="Liberation Sans" font-size="21" fill="#00ff00" stroke="#00ff00" stroke-width="0.5" letter-spacing="2" text-anchor="middle">0</text>
<g opacity="0.9"><path d="M1231 345.95L1240.5 363.05L1221.5 363.05Z" fill="#c8a040" stroke="#a87828" stroke-width="1" stroke-linejoin="round"/><rect x="1230.2" y="351.42" width="1.6" height="6.84" fill="#222"/><rect x="1230.2" y="359.63" width="1.6" height="1.6" fill="#222"/></g>
<text x="1231.5" y="361.06" font-family="Liberation Sans" font-size="21" fill="#00ff00" stroke="#00ff00" stroke-width="0.5" letter-spacing="2" text-anchor="middle">0</text>
<g opacity="0.9"><path d="M1859.3 722.95L1868.8 740.05L1849.8 740.05Z" fill="#c8a040" stroke="#a87828" stroke-width="1" stroke-linejoin="round"/><rect x="1858.5" y="728.42" width="1.6" height="6.84" fill="#222"/><rect x="1858.5" y="736.63" width="1.6" height="1.6" fill="#222"/></g>
<text x="1859.8" y="738.06" font-family="Liberation Sans" font-size="21" fill="#00ff00" stroke="#00ff00" stroke-width="0.5" letter-spacing="2" text-anchor="middle">0</text>
<text x="989" y="362.3" font-family="Liberation Sans" font-size="20" fill="#00ff00" stroke="#00ff00" stroke-width="0.5" letter-spacing="2" text-anchor="middle">0.0</text>
<g opacity="0.72"><path d="M988 349.18L996.25 364.03L979.75 364.03Z" fill="#c8a040" stroke="#a87828" stroke-width="1" stroke-linejoin="round"/><rect x="987.2" y="353.93" width="1.6" height="5.94" fill="#222"/><rect x="987.2" y="361.06" width="1.6" height="1.6" fill="#222"/></g>
<text x="759" y="592.6" font-family="Liberation Sans" font-size="20" fill="#00ff00" stroke="#00ff00" stroke-width="0.5" letter-spacing="2" text-anchor="middle">0.0</text>
<g opacity="0.72"><path d="M758 579.48L766.25 594.32L749.75 594.32Z" fill="#c8a040" stroke="#a87828" stroke-width="1" stroke-linejoin="round"/><rect x="757.2" y="584.23" width="1.6" height="5.94" fill="#222"/><rect x="757.2" y="591.36" width="1.6" height="1.6" fill="#222"/></g>
<g opacity="0.6"><path d="M549.5 394.7L556 406.4L543 406.4Z" fill="#c8a040" stroke="#a87828" stroke-width="1" stroke-linejoin="round"/><rect x="548.7" y="398.44" width="1.6" height="4.68" fill="#222"/><rect x="548.7" y="404.06" width="1.6" height="1.6" fill="#222"/></g>
<text x="554" y="404.07" font-family="Liberation Sans" font-size="19.5" fill="#00ff00" stroke="#00ff00" stroke-width="0.5" letter-spacing="2" text-anchor="middle">0.00</text>
<text y="188" font-family="'Liberation Serif','Noto Serif CJK SC',serif" font-size="20.5" font-weight="bold" fill="#000"><tspan x="25">1#</tspan><tspan x="45.7">泄压阀</tspan></text>
<text y="188" font-family="'Liberation Serif','Noto Serif CJK SC',serif" font-size="20.5" font-weight="bold" fill="#000"><tspan x="421">2#</tspan><tspan x="441.7">泄压阀</tspan></text>
<text x="229.25" y="281.85" font-family="'Liberation Serif','Noto Serif CJK SC',serif" font-size="20" font-weight="bold" letter-spacing="0.5" fill="#000">储料池</text>
<text x="204.5" y="545.6" font-family="'Liberation Serif','Noto Serif CJK SC',serif" font-size="20" font-weight="bold" letter-spacing="0.5" fill="#000">皮渣输送机</text>
<text x="474.25" y="430.1" font-family="'Liberation Serif','Noto Serif CJK SC',serif" font-size="16" font-weight="bold" letter-spacing="0.5" fill="#ff0000">蒸汽</text>
<text x="176.25" y="759.2" font-family="'Liberation Serif','Noto Serif CJK SC',serif" font-size="19" font-weight="bold" letter-spacing="1.5" fill="#0000ff">料斗</text>
<text x="768.9" y="430.6" font-family="'Liberation Serif','Noto Serif CJK SC',serif" font-size="20" font-weight="bold" letter-spacing="0.8" fill="#0000ff">冷破预热器</text>
<text x="1058.4" y="234.6" font-family="'Liberation Serif','Noto Serif CJK SC',serif" font-size="20" font-weight="bold" letter-spacing="0.8" fill="#0000ff">清洗水回流</text>
<text x="1193.2" y="418.6" font-family="'Liberation Serif','Noto Serif CJK SC',serif" font-size="20" font-weight="bold" letter-spacing="0.8" fill="#0000ff">缓冲罐</text>
<text x="1348.5" y="505.8" font-family="'Liberation Serif','Noto Serif CJK SC',serif" font-size="18" font-weight="bold" fill="#0000ff">西</text>
<text x="1864" y="506.8" font-family="'Liberation Serif','Noto Serif CJK SC',serif" font-size="18" font-weight="bold" fill="#0000ff">东</text>
<text x="1312.5" y="643.7" font-family="'Liberation Serif','Noto Serif CJK SC',serif" font-size="19" font-weight="bold" letter-spacing="1" fill="#0000ff">喷淋</text>
<text x="1531" y="643.7" font-family="'Liberation Serif','Noto Serif CJK SC',serif" font-size="19" font-weight="bold" letter-spacing="1" fill="#0000ff">喷淋</text>
<text x="1419.2" y="782.6" font-family="'Liberation Serif','Noto Serif CJK SC',serif" font-size="20" font-weight="bold" letter-spacing="0.8" fill="#0000ff">果汁罐</text>
<text x="1679.2" y="782.6" font-family="'Liberation Serif','Noto Serif CJK SC',serif" font-size="20" font-weight="bold" letter-spacing="0.8" fill="#0000ff">果汁罐</text>
<text x="1779.75" y="958.7" font-family="'Liberation Serif','Noto Serif CJK SC',serif" font-size="17" font-weight="bold" fill="#0000ff">蒸发器</text>
<text x="42" y="1060.8" font-family="'Liberation Serif','Noto Serif CJK SC',serif" font-size="27" letter-spacing="3" fill="#000">登录</text>
<text x="168" y="1060.8" font-family="'Liberation Serif','Noto Serif CJK SC',serif" font-size="27" letter-spacing="3" fill="#000">注销</text>
<text x="294" y="1060.8" font-family="'Liberation Serif','Noto Serif CJK SC',serif" font-size="27" letter-spacing="3" fill="#000">退出</text>
<text x="465.6" y="1060.8" font-family="'Liberation Serif','Noto Serif CJK SC',serif" font-size="27" letter-spacing="3" fill="#fff">主界面</text>
<text x="620.3" y="1060.8" font-family="'Liberation Serif','Noto Serif CJK SC',serif" font-size="27" letter-spacing="2" fill="#fff">参数设置</text>
<text x="802.2" y="1060.8" font-family="'Liberation Serif','Noto Serif CJK SC',serif" font-size="27" letter-spacing="3" fill="#fff">趋势图</text>
<text x="985" y="1060.8" font-family="'Liberation Serif','Noto Serif CJK SC',serif" font-size="27" letter-spacing="3" fill="#fff">报警</text>
<text x="1124.1" y="1060.8" font-family="'Liberation Serif','Noto Serif CJK SC',serif" font-size="27" letter-spacing="2" fill="#fff">历史数据</text>
<text x="1292.1" y="1060.8" font-family="'Liberation Serif','Noto Serif CJK SC',serif" font-size="27" letter-spacing="2" fill="#fff">用户管理</text>
<text x="1461.3" y="1060.8" font-family="'Liberation Serif','Noto Serif CJK SC',serif" font-size="27" letter-spacing="2" fill="#fff">操作记录</text>
<text x="1819" y="1055.4" font-family="'Liberation Sans','Noto Sans CJK SC',sans-serif" font-size="15" fill="#000">您好!</text>
<g><path d="M412.500 1037Q412.500 1034 416 1033.500H435Q438.500 1034 438.500 1037V1056Q438.500 1059 435 1059.500H416Q412.500 1059 412.500 1056Z" fill="url(#cylH)" stroke="#111" stroke-width="1.400"/><rect x="412.500" y="1059" width="4" height="8.500" fill="#0a0a0a"/><rect x="418" y="1059.500" width="3.500" height="5.500" fill="#0a0a0a"/><rect x="429.500" y="1059.500" width="3.500" height="5.500" fill="#0a0a0a"/><rect x="434.500" y="1059" width="4" height="8.500" fill="#0a0a0a"/></g>
<g><ellipse cx="593.500" cy="1066.500" rx="14" ry="2.200" fill="#b4b4b4"/><rect x="601" y="1033.500" width="3.200" height="10" fill="#f4f4f4" stroke="#d04040" stroke-width="0.5"/><path d="M581 1050L593.800 1037L607 1050V1066H581Z" fill="url(#wallG)"/><path d="M577.200 1050.500L593.800 1033.200L610.200 1049.500L607.500 1052.800L593.800 1039.800L580.500 1054Z" fill="url(#roofG)" stroke="#b00c08" stroke-width="0.5" stroke-linejoin="round"/><rect x="589.800" y="1051.500" width="7.600" height="14.500" fill="#d88a34" stroke="#a05a14" stroke-width="0.7"/><path d="M592.300 1052V1066M594.900 1052V1066" stroke="#b86c20" stroke-width="0.5"/></g>
<g transform="rotate(-24 760.800 1050.600)"><rect x="747" y="1039" width="27.500" height="23" rx="3" fill="url(#trendG)" stroke="#0a1240" stroke-width="1"/><path d="M748 1061.500h25.500" stroke="#c8d0e8" stroke-width="1"/><path d="M749 1056l3 -1.500 1.500 2 2.500 -5 1.500 4 2 -2 1.500 3 3 -12 2 5 1.500 -4 2 6 2 -3" fill="none" stroke="#ffffff" stroke-width="1.300" stroke-linejoin="round"/></g>
<g stroke-linejoin="round"><path d="M915.100 1061.800L918.800 1065.200L944.600 1060L944.500 1057.800Z" fill="#9c8c00" stroke="#9c8c00" stroke-width="1.500"/><path d="M929.600 1035.300L944 1057.600L915.800 1061.300Z" fill="#ffe800" stroke="#ffe800" stroke-width="2.600"/><path d="M929.600 1036.500L922 1051" stroke="#fff6a0" stroke-width="1.500" opacity="0.8"/><path d="M929.300 1041Q931 1039.500 932.700 1041L932.300 1052.500H930.300Z" fill="#1a1a1a" stroke="#1a1a1a" stroke-width="0.8"/><ellipse cx="931.800" cy="1057.300" rx="2" ry="1.900" fill="#1a1a1a"/></g>
<g><ellipse cx="1098.500" cy="1064.300" rx="6.800" ry="2.200" fill="#a85418" stroke="#7a3c10" stroke-width="0.5"/><rect x="1097.300" y="1058.500" width="2.400" height="5" fill="#b86820"/><path d="M1092.500 1035.500A13.200 13.200 0 0 0 1102 1059.500" fill="none" stroke="#9a5418" stroke-width="1.600"/><circle cx="1098.800" cy="1046.800" r="11.300" fill="url(#globeG)"/><path d="M1090 1041q3 -5 8 -4q2 3 -1 5q1 3 -2 5q-4 0 -5 -6zM1098 1047q4 -2 6 0q3 0 3 3q-1 4 -5 4q-4 -2 -4 -7zM1101 1040q3 -1 4 1q-2 2 -4 -1z" fill="#b8c838" opacity="0.9"/></g>
<g><path d="M1248 1057.500Q1248.500 1046.300 1257.500 1046.300Q1266.400 1046.300 1266.400 1058.400Q1257 1061 1248 1057.500Z" fill="url(#usrA)"/><circle cx="1258.300" cy="1041.300" r="4.500" fill="url(#usrA)"/><path d="M1256 1061Q1256 1047 1269.500 1047Q1283 1047 1283 1060.500Q1270 1068.500 1256 1061Z" fill="url(#usrB)"/><circle cx="1270.400" cy="1041.200" r="6.400" fill="url(#usrB)"/></g>
<g><path d="M1420.500 1046L1431 1050.500L1447.500 1048L1437 1061.500L1429 1061Z" fill="#9cc020"/><path d="M1420 1044.500Q1426 1042 1432 1048Q1439 1043 1447.500 1046.500L1436.500 1059.500Q1432 1056 1428.500 1059.500Z" fill="#f4f4f0" stroke="#b8b8b0" stroke-width="0.6"/><path d="M1432 1048L1432.500 1059" stroke="#c8c8c0" stroke-width="0.7"/><path d="M1434 1046.200L1444 1057.200" stroke="#2a6cd0" stroke-width="2.600" stroke-linecap="round"/><circle cx="1430.800" cy="1042.900" r="4.500" fill="#d8ecfa" fill-opacity="0.85" stroke="#3c8ce0" stroke-width="1.500"/></g>
<g><path d="M1652 1063q0-11 10-11q10 0 10 11z" fill="#e8e8f0" stroke="#9090a0" stroke-width="0.8"/><path d="M1660.500 1053h3l1 8-2.500 2-2.500-2z" fill="#e02020"/><circle cx="1662" cy="1046" r="6" fill="#f8d8b8" stroke="#c09870" stroke-width="0.6"/><path d="M1655.500 1045q0-7 6.500-7q6.500 0 6.500 7q-3-3-6.500-3q-3.500 0-6.500 3z" fill="#2840a8"/></g>
</svg>
</body></html>
